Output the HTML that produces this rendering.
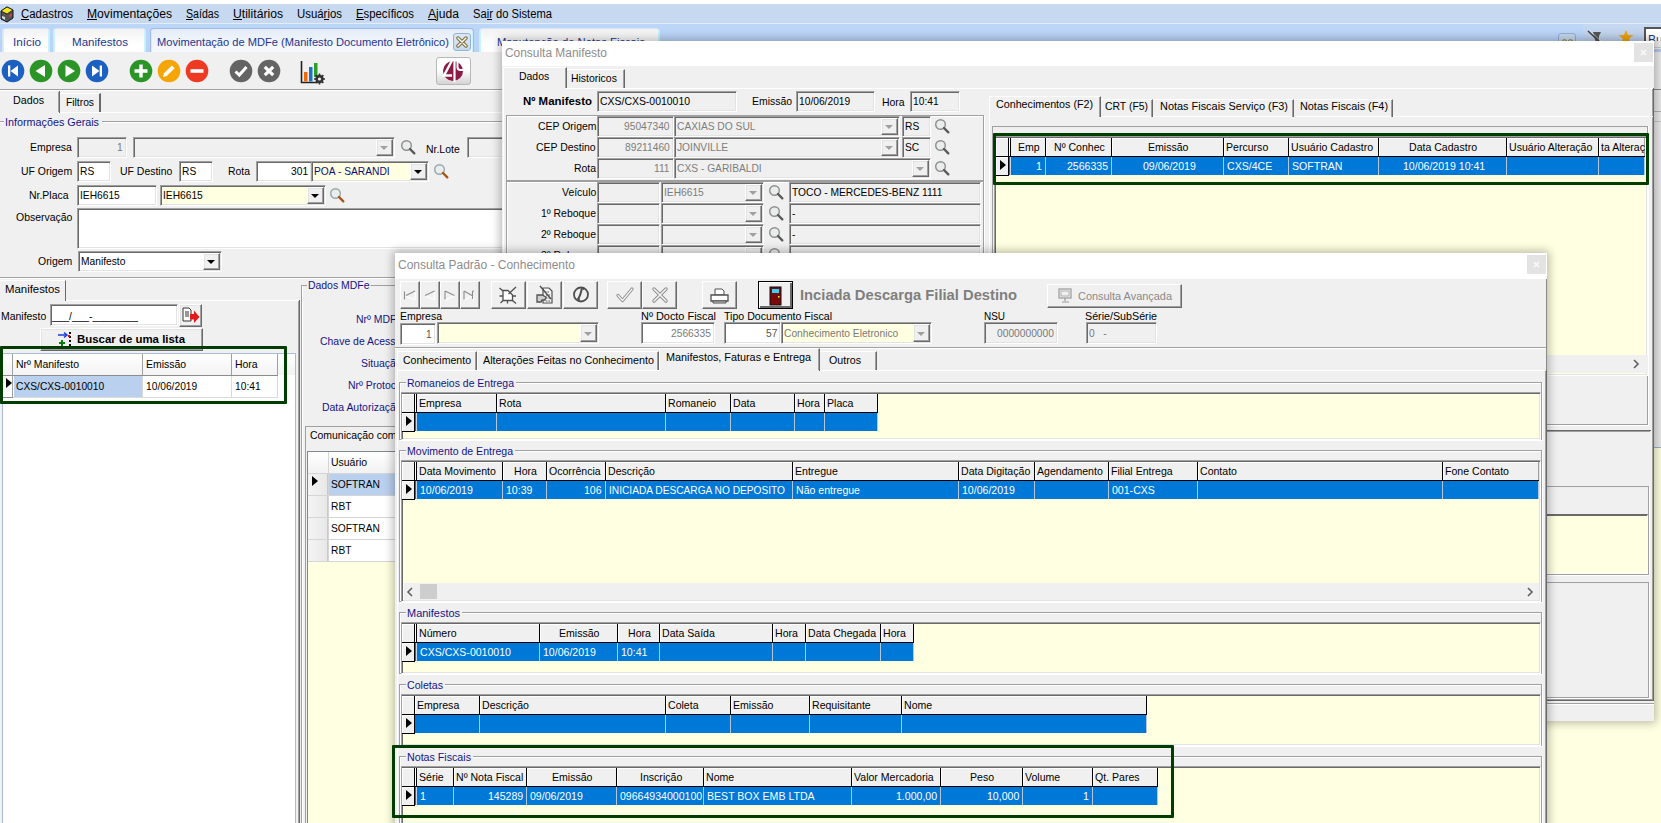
<!DOCTYPE html>
<html><head><meta charset="utf-8"><style>
html,body{margin:0;padding:0;width:1661px;height:823px;overflow:hidden;background:#f0f0f0;position:relative}
div{position:absolute;box-sizing:border-box}
.t{white-space:pre;line-height:1;font-family:"Liberation Sans", sans-serif}
svg{position:absolute}
</style></head><body>
<div style="left:0px;top:0px;width:1661px;height:4px;background:#ffffff"></div>
<div style="left:0px;top:4px;width:1661px;height:19px;background:#c6d9f0"></div>
<div style="left:0px;top:23px;width:1661px;height:1px;background:#e3ecf7"></div>
<div style="left:0px;top:24px;width:1661px;height:28px;background:linear-gradient(#bcd6f8,#b9d3f6)"></div>
<svg style="position:absolute;left:0;top:6px" width="14" height="17" viewBox="0 0 14 17"><path d="M1 5 L7 1 L13 4 L13 12 L7 16 L1 13 Z" fill="#555" stroke="#111" stroke-width="1"/><path d="M1 5 L7 1 L13 4 L7 8 Z" fill="#f4e81c" stroke="#111" stroke-width="0.8"/><path d="M2 10 L5 11 L5 14 L2 12Z" fill="#ddd"/><path d="M9 9 L12 8 L12 10 L9 11Z" fill="#e33"/></svg>
<div class="t" style="left:21.00px;top:8.34px;font-size:12px;color:#000;transform:scaleX(0.9508);transform-origin:0 0;">Cadastros</div>
<div style="left:21px;top:19px;width:8px;height:1px;background:#000"></div>
<div class="t" style="left:87.00px;top:8.34px;font-size:12px;color:#000;transform:scaleX(1.0115);transform-origin:0 0;">Movimentações</div>
<div style="left:87px;top:19px;width:10px;height:1px;background:#000"></div>
<div class="t" style="left:186.00px;top:8.34px;font-size:12px;color:#000;transform:scaleX(0.8834);transform-origin:0 0;">Saídas</div>
<div style="left:186px;top:19px;width:7px;height:1px;background:#000"></div>
<div class="t" style="left:233.00px;top:8.34px;font-size:12px;color:#000;transform:scaleX(1.0134);transform-origin:0 0;">Utilitários</div>
<div style="left:233px;top:19px;width:9px;height:1px;background:#000"></div>
<div class="t" style="left:297.00px;top:8.34px;font-size:12px;color:#000;transform:scaleX(0.9504);transform-origin:0 0;">Usuários</div>
<div style="left:324px;top:19px;width:5px;height:1px;background:#000"></div>
<div class="t" style="left:356.00px;top:8.34px;font-size:12px;color:#000;transform:scaleX(0.9453);transform-origin:0 0;">Específicos</div>
<div style="left:356px;top:19px;width:8px;height:1px;background:#000"></div>
<div class="t" style="left:428.00px;top:8.34px;font-size:12px;color:#000;transform:scaleX(1.0101);transform-origin:0 0;">Ajuda</div>
<div style="left:428px;top:19px;width:8px;height:1px;background:#000"></div>
<div class="t" style="left:473.00px;top:8.34px;font-size:12px;color:#000;transform:scaleX(0.9327);transform-origin:0 0;">Sair do Sistema</div>
<div style="left:487px;top:19px;width:5px;height:1px;background:#000"></div>
<div style="left:2px;top:28px;width:48px;height:24px;background:linear-gradient(#f2f2f2,#ffffff 70%);border:1px solid #d7e6f7;border-bottom:none;border-radius:4px 4px 0 0"></div>
<div style="left:3px;top:31px;width:1px;height:21px;background:#c9f3ff"></div>
<div style="left:48px;top:31px;width:1px;height:21px;background:#c9f3ff"></div>
<div class="t" style="left:13.00px;top:37.43px;font-size:11.3px;color:#1f3590;transform:scaleX(1.0368);transform-origin:0 0;">Início</div>
<div style="left:53px;top:28px;width:93px;height:24px;background:linear-gradient(#f2f2f2,#ffffff 70%);border:1px solid #d7e6f7;border-bottom:none;border-radius:4px 4px 0 0"></div>
<div style="left:54px;top:31px;width:1px;height:21px;background:#c9f3ff"></div>
<div style="left:144px;top:31px;width:1px;height:21px;background:#c9f3ff"></div>
<div class="t" style="left:71.50px;top:37.43px;font-size:11.3px;color:#1f3590;transform:scaleX(1.0249);transform-origin:0 0;">Manifestos</div>
<div style="left:150px;top:28px;width:324px;height:24px;background:linear-gradient(#e6edf8,#f4f7fc 80%);border:1px solid #9dbbe6;border-bottom:none;border-radius:4px 4px 0 0"></div>
<div style="left:151px;top:31px;width:1px;height:21px;background:#c9f3ff"></div>
<div style="left:472px;top:31px;width:1px;height:21px;background:#c9f3ff"></div>
<div class="t" style="left:156.50px;top:37.43px;font-size:11.3px;color:#1f3590;transform:scaleX(0.9830);transform-origin:0 0;">Movimentação de MDFe (Manifesto Documento Eletrônico)</div>
<div style="left:453px;top:33px;width:18px;height:18px;background:linear-gradient(#dbe6f4,#c9d9ee);border:1px solid #93b1d9;border-radius:3px"></div>
<svg style="position:absolute;left:456px;top:36px" width="12" height="12" viewBox="0 0 12 12"><path d="M2 2 L10 10 M10 2 L2 10" stroke="#7d6a2e" stroke-width="3.4" stroke-linecap="round"/><path d="M2 2 L10 10 M10 2 L2 10" stroke="#fff" stroke-width="1.4" stroke-linecap="round"/></svg>
<div style="left:479px;top:28px;width:181px;height:24px;background:linear-gradient(#f2f2f2,#ffffff 70%);border:1px solid #d7e6f7;border-bottom:none;border-radius:4px 4px 0 0"></div>
<div style="left:480px;top:31px;width:1px;height:21px;background:#c9f3ff"></div>
<div style="left:658px;top:31px;width:1px;height:21px;background:#c9f3ff"></div>
<div class="t" style="left:496.50px;top:37.43px;font-size:11.3px;color:#1f3590;transform:scaleX(0.9943);transform-origin:0 0;">Manutenção de Notas Fiscais</div>
<div style="left:1558px;top:33px;width:18px;height:12px;border:1px solid #8fb0d8;border-radius:3px;background:#c7d9ef"></div>
<div style="left:1583px;top:24px;width:78px;height:28px;background:linear-gradient(#c6d8f2,#b9cce8)"></div>
<svg style="position:absolute;left:1561px;top:38px" width="13" height="6" viewBox="0 0 13 6"><circle cx="3.5" cy="4" r="2.3" fill="none" stroke="#8a7a30" stroke-width="1"/><circle cx="9.5" cy="4" r="2.3" fill="none" stroke="#8a7a30" stroke-width="1"/></svg>
<svg style="position:absolute;left:1587px;top:30px" width="16" height="14" viewBox="0 0 16 14"><path d="M6 2 L14 2 L12 6 L12 13 L9 13 Z" fill="#555"/><path d="M1 1 L15 14" stroke="#444" stroke-width="1.6"/><path d="M2 0 L16 13" stroke="#eee" stroke-width="0.6"/></svg>
<svg style="position:absolute;left:1618px;top:29px" width="16" height="16" viewBox="0 0 16 16"><path d="M8 1 L10 6 L15.5 6.2 L11.2 9.5 L12.8 15 L8 11.8 L3.2 15 L4.8 9.5 L0.5 6.2 L6 6 Z" fill="#f0a30a"/></svg>
<div style="left:1644px;top:27px;width:17px;height:20px;background:#fff;border:1px solid #555;border-width:2px 0 0 2px"></div>
<div class="t" style="top:33.84px;font-size:12px;color:#2b3a8a;left:1648px;">Bu</div>
<div style="left:0px;top:52px;width:1661px;height:37px;background:#f0f0f0"></div>
<div style="left:0px;top:89px;width:1661px;height:1px;background:#a0a0a0"></div>
<div style="left:0px;top:90px;width:1661px;height:1px;background:#ffffff"></div>
<svg style="position:absolute;left:1px;top:59px" width="24" height="24" viewBox="0 0 24 24"><circle cx="12" cy="12" r="11.3" fill="#1c60c2"/><path d="M7 6.5 H9.3 V17.5 H7 Z" fill="#fff"/><path d="M9.5 12 L17 6.5 V17.5 Z" fill="#fff"/></svg>
<svg style="position:absolute;left:29px;top:59px" width="24" height="24" viewBox="0 0 24 24"><circle cx="12" cy="12" r="11.3" fill="#2b9426"/><path d="M6.5 12 L16 6 V18 Z" fill="#fff"/></svg>
<svg style="position:absolute;left:57px;top:59px" width="24" height="24" viewBox="0 0 24 24"><circle cx="12" cy="12" r="11.3" fill="#2b9426"/><path d="M8.5 6 L18 12 L8.5 18 Z" fill="#fff"/></svg>
<svg style="position:absolute;left:85px;top:59px" width="24" height="24" viewBox="0 0 24 24"><circle cx="12" cy="12" r="11.3" fill="#1c60c2"/><path d="M14.7 6.5 H17 V17.5 H14.7 Z" fill="#fff"/><path d="M14.5 12 L7 6.5 V17.5 Z" fill="#fff"/></svg>
<svg style="position:absolute;left:129px;top:59px" width="24" height="24" viewBox="0 0 24 24"><circle cx="12" cy="12" r="11.3" fill="#2b9426"/><path d="M10.3 5.5 H13.7 V10.3 H18.5 V13.7 H13.7 V18.5 H10.3 V13.7 H5.5 V10.3 H10.3 Z" fill="#fff"/></svg>
<svg style="position:absolute;left:157px;top:59px" width="24" height="24" viewBox="0 0 24 24"><circle cx="12" cy="12" r="11.3" fill="#f6a506"/><path d="M6 18 L7 14.2 L14.8 6.4 L17.6 9.2 L9.8 17 Z" fill="#fff"/></svg>
<svg style="position:absolute;left:185px;top:59px" width="24" height="24" viewBox="0 0 24 24"><circle cx="12" cy="12" r="11.3" fill="#ee3a22"/><rect x="5.5" y="10.2" width="13" height="3.6" fill="#fff"/></svg>
<svg style="position:absolute;left:229px;top:59px" width="24" height="24" viewBox="0 0 24 24"><circle cx="12" cy="12" r="11.3" fill="#646464"/><path d="M6.5 12.5 L10.3 16 L17.5 8" stroke="#fff" stroke-width="3" fill="none"/></svg>
<svg style="position:absolute;left:257px;top:59px" width="24" height="24" viewBox="0 0 24 24"><circle cx="12" cy="12" r="11.3" fill="#646464"/><path d="M7.8 7.8 L16.2 16.2 M16.2 7.8 L7.8 16.2" stroke="#fff" stroke-width="3.2"/></svg>
<svg style="position:absolute;left:300px;top:60px" width="26" height="25" viewBox="0 0 26 25"><path d="M1.5 1 V22.5 H18" stroke="#222" stroke-width="1.6" fill="none"/><rect x="4" y="12" width="3.5" height="9.5" fill="#f06a10"/><rect x="9" y="7" width="3.5" height="14.5" fill="#1c70c8"/><rect x="14" y="3" width="3.5" height="14" fill="#2aa02a"/><circle cx="19.5" cy="19" r="4.2" fill="#333"/><circle cx="19.5" cy="19" r="1.6" fill="#f0f0f0"/><path d="M19.5 13.5 V24.5 M14 19 H25 M15.6 15.1 L23.4 22.9 M23.4 15.1 L15.6 22.9" stroke="#333" stroke-width="1.6"/><circle cx="19.5" cy="19" r="1.6" fill="#f0f0f0"/></svg>
<div style="left:436px;top:57px;width:35px;height:28px;background:linear-gradient(#ffffff 45%,#d4d4d4);border:1px solid #b8b8b8;border-radius:3px"></div>
<svg style="position:absolute;left:442px;top:59px" width="24" height="24" viewBox="0 0 24 24"><circle cx="11" cy="12" r="10" fill="#8c1a42"/><path d="M10 1.5 L2 16.5 H10" stroke="#fff" stroke-width="2.4" fill="none"/><path d="M12.5 1.5 V23" stroke="#fff" stroke-width="2.2"/><path d="M15.5 2.5 V8 Q15.5 11 18.5 11 H21" stroke="#fff" stroke-width="2" fill="none"/></svg>
<div style="left:0px;top:91px;width:1661px;height:732px;background:#f0f0f0"></div>
<div style="left:0px;top:112px;width:1661px;height:1px;background:#ffffff"></div>
<div style="left:0px;top:91px;width:60px;height:22px;background:#f0f0f0;border-right:1px solid #696969"></div>
<div style="left:58px;top:92px;width:1px;height:20px;background:#a0a0a0"></div>
<div class="t" style="left:13.00px;top:94.69px;font-size:11px;color:#000;transform:scaleX(0.9750);transform-origin:0 0;">Dados</div>
<div style="left:60px;top:93px;width:41px;height:19px;border-top:1px solid #fff;border-right:2px solid #696969"></div>
<div class="t" style="left:66.00px;top:96.69px;font-size:11px;color:#000;transform:scaleX(0.9351);transform-origin:0 0;">Filtros</div>
<div style="left:0px;top:121px;width:1661px;height:1px;background:#a0a0a0"></div>
<div style="left:0px;top:122px;width:1661px;height:1px;background:#ffffff"></div>
<div style="left:4px;top:116px;width:98px;height:12px;background:#f0f0f0"></div>
<div class="t" style="left:5.00px;top:116.69px;font-size:11px;color:#14148a;transform:scaleX(0.9794);transform-origin:0 0;">Informações Gerais</div>
<div class="t" style="left:30.19px;top:141.69px;font-size:11px;color:#000;transform:scaleX(0.9500);transform-origin:0 0;">Empresa</div>
<div style="left:77px;top:137px;width:50px;height:21px;border:1px solid;border-color:#a0a0a0 #fff #fff #a0a0a0;box-shadow:inset 1px 1px #696969, inset -1px -1px #e3e3e3;background:#f0f0f0;"></div>
<div class="t" style="left:117.31px;top:142.19px;font-size:11px;color:#7a7a7a;transform:scaleX(0.9300);transform-origin:0 0;">1</div>
<div style="left:133px;top:137px;width:262px;height:21px;border:1px solid;border-color:#a0a0a0 #fff #fff #a0a0a0;box-shadow:inset 1px 1px #696969, inset -1px -1px #e3e3e3;background:#f0f0f0;"></div>
<div style="left:376px;top:139px;width:17px;height:17px;border:1px solid;border-color:#fff #696969 #696969 #fff;box-shadow:inset -1px -1px #a0a0a0, inset 1px 1px #e3e3e3;background:#f0f0f0;"></div>
<div style="left:380px;top:146px;width:0;height:0;border-left:4px solid transparent;border-right:4px solid transparent;border-top:4px solid #a0a0a0"></div>
<svg style="position:absolute;left:399px;top:139px" width="18" height="18" viewBox="0 0 18 18"><circle cx="7.5" cy="6.5" r="4.8" fill="#e9eded" stroke="#8e8e8e" stroke-width="1.4"/><path d="M11 10 L15.3 14.3" stroke="#5a5a5a" stroke-width="2.4" stroke-linecap="round"/></svg>
<div class="t" style="left:426.00px;top:143.69px;font-size:11px;color:#000;transform:scaleX(0.9500);transform-origin:0 0;">Nr.Lote</div>
<div style="left:467px;top:137px;width:60px;height:21px;border:1px solid;border-color:#a0a0a0 #fff #fff #a0a0a0;box-shadow:inset 1px 1px #696969, inset -1px -1px #e3e3e3;background:#f0f0f0;"></div>
<div class="t" style="left:20.91px;top:165.69px;font-size:11px;color:#000;transform:scaleX(0.9500);transform-origin:0 0;">UF Origem</div>
<div style="left:77px;top:161px;width:34px;height:21px;border:1px solid;border-color:#a0a0a0 #fff #fff #a0a0a0;box-shadow:inset 1px 1px #696969, inset -1px -1px #e3e3e3;background:#fff;"></div>
<div class="t" style="left:80.00px;top:166.19px;font-size:11px;color:#000;transform:scaleX(0.9300);transform-origin:0 0;">RS</div>
<div class="t" style="left:120.00px;top:165.69px;font-size:11px;color:#000;transform:scaleX(0.9500);transform-origin:0 0;">UF Destino</div>
<div style="left:179px;top:161px;width:34px;height:21px;border:1px solid;border-color:#a0a0a0 #fff #fff #a0a0a0;box-shadow:inset 1px 1px #696969, inset -1px -1px #e3e3e3;background:#fff;"></div>
<div class="t" style="left:182.00px;top:166.19px;font-size:11px;color:#000;transform:scaleX(0.9300);transform-origin:0 0;">RS</div>
<div class="t" style="left:228.00px;top:165.69px;font-size:11px;color:#000;transform:scaleX(0.9500);transform-origin:0 0;">Rota</div>
<div style="left:256px;top:161px;width:56px;height:21px;border:1px solid;border-color:#a0a0a0 #fff #fff #a0a0a0;box-shadow:inset 1px 1px #696969, inset -1px -1px #e3e3e3;background:#fff;"></div>
<div class="t" style="left:290.93px;top:166.19px;font-size:11px;color:#000;transform:scaleX(0.9300);transform-origin:0 0;">301</div>
<div style="left:311px;top:161px;width:118px;height:21px;border:1px solid;border-color:#a0a0a0 #fff #fff #a0a0a0;box-shadow:inset 1px 1px #696969, inset -1px -1px #e3e3e3;background:#ffffe1;"></div>
<div style="left:410px;top:163px;width:17px;height:17px;border:1px solid;border-color:#fff #696969 #696969 #fff;box-shadow:inset -1px -1px #a0a0a0, inset 1px 1px #e3e3e3;background:#f0f0f0;"></div>
<div style="left:414px;top:170px;width:0;height:0;border-left:4px solid transparent;border-right:4px solid transparent;border-top:4px solid #000"></div>
<div class="t" style="left:314.00px;top:166.19px;font-size:11px;color:#0c0c82;transform:scaleX(0.9300);transform-origin:0 0;">POA - SARANDI</div>
<svg style="position:absolute;left:432px;top:163px" width="18" height="18" viewBox="0 0 18 18"><circle cx="7.5" cy="6.5" r="4.8" fill="#e9eded" stroke="#98a6a8" stroke-width="1.4"/><path d="M11 10 L15.3 14.3" stroke="#a4541c" stroke-width="2.4" stroke-linecap="round"/></svg>
<div class="t" style="left:28.51px;top:189.69px;font-size:11px;color:#000;transform:scaleX(0.9500);transform-origin:0 0;">Nr.Placa</div>
<div style="left:77px;top:185px;width:80px;height:21px;border:1px solid;border-color:#a0a0a0 #fff #fff #a0a0a0;box-shadow:inset 1px 1px #696969, inset -1px -1px #e3e3e3;background:#fff;"></div>
<div class="t" style="left:80.00px;top:190.19px;font-size:11px;color:#000;transform:scaleX(0.9300);transform-origin:0 0;">IEH6615</div>
<div style="left:160px;top:185px;width:166px;height:21px;border:1px solid;border-color:#a0a0a0 #fff #fff #a0a0a0;box-shadow:inset 1px 1px #696969, inset -1px -1px #e3e3e3;background:#ffffe1;"></div>
<div style="left:307px;top:187px;width:17px;height:17px;border:1px solid;border-color:#fff #696969 #696969 #fff;box-shadow:inset -1px -1px #a0a0a0, inset 1px 1px #e3e3e3;background:#f0f0f0;"></div>
<div style="left:311px;top:194px;width:0;height:0;border-left:4px solid transparent;border-right:4px solid transparent;border-top:4px solid #000"></div>
<div class="t" style="left:163.00px;top:190.19px;font-size:11px;color:#000;transform:scaleX(0.9300);transform-origin:0 0;">IEH6615</div>
<svg style="position:absolute;left:328px;top:187px" width="18" height="18" viewBox="0 0 18 18"><circle cx="7.5" cy="6.5" r="4.8" fill="#e9eded" stroke="#98a6a8" stroke-width="1.4"/><path d="M11 10 L15.3 14.3" stroke="#a4541c" stroke-width="2.4" stroke-linecap="round"/></svg>
<div class="t" style="left:15.66px;top:211.69px;font-size:11px;color:#000;transform:scaleX(0.9500);transform-origin:0 0;">Observação</div>
<div style="left:77px;top:208px;width:500px;height:41px;border:1px solid;border-color:#a0a0a0 #fff #fff #a0a0a0;box-shadow:inset 1px 1px #696969, inset -1px -1px #e3e3e3;background:#fff;"></div>
<div class="t" style="left:37.74px;top:255.69px;font-size:11px;color:#000;transform:scaleX(0.9500);transform-origin:0 0;">Origem</div>
<div style="left:78px;top:251px;width:144px;height:21px;border:1px solid;border-color:#a0a0a0 #fff #fff #a0a0a0;box-shadow:inset 1px 1px #696969, inset -1px -1px #e3e3e3;background:#fff;"></div>
<div style="left:203px;top:253px;width:17px;height:17px;border:1px solid;border-color:#fff #696969 #696969 #fff;box-shadow:inset -1px -1px #a0a0a0, inset 1px 1px #e3e3e3;background:#f0f0f0;"></div>
<div style="left:207px;top:260px;width:0;height:0;border-left:4px solid transparent;border-right:4px solid transparent;border-top:4px solid #000"></div>
<div class="t" style="left:81.00px;top:256.19px;font-size:11px;color:#000;transform:scaleX(0.9300);transform-origin:0 0;">Manifesto</div>
<div style="left:0px;top:277px;width:1661px;height:1px;background:#a0a0a0"></div>
<div style="left:0px;top:278px;width:1661px;height:1px;background:#ffffff"></div>
<div style="left:0px;top:280px;width:66px;height:21px;border-right:1px solid #696969;border-top:1px solid #fff"></div>
<div class="t" style="left:5.00px;top:283.69px;font-size:11px;color:#000;transform:scaleX(1.0341);transform-origin:0 0;">Manifestos</div>
<div style="left:66px;top:300px;width:233px;height:1px;background:#ffffff"></div>
<div style="left:299px;top:300px;width:1px;height:523px;background:#696969"></div>
<div style="left:298px;top:301px;width:1px;height:522px;background:#a0a0a0"></div>
<div class="t" style="left:1.00px;top:310.69px;font-size:11px;color:#000;transform:scaleX(0.9500);transform-origin:0 0;">Manifesto</div>
<div style="left:50px;top:304px;width:128px;height:22px;border:1px solid;border-color:#a0a0a0 #fff #fff #a0a0a0;box-shadow:inset 1px 1px #696969, inset -1px -1px #e3e3e3;background:#fff;"></div>
<div class="t" style="left:52.00px;top:310.69px;font-size:11px;color:#000;transform:scaleX(0.9312);transform-origin:0 0;">___/___-________</div>
<div style="left:179px;top:304px;width:23px;height:23px;border:1px solid;border-color:#fff #696969 #696969 #fff;box-shadow:inset -1px -1px #a0a0a0, inset 1px 1px #e3e3e3;background:#f0f0f0;"></div>
<svg style="position:absolute;left:182px;top:307px" width="18" height="17" viewBox="0 0 18 17"><path d="M1 1 H7 L9 3 V14 H1 Z" fill="#fff" stroke="#333"/><path d="M3 5 H7 M3 7 H7 M3 9 H7" stroke="#333"/><path d="M8 7 H12 V3.5 L17.5 10 L12 16 V12.5 H8 Z" fill="#e21a1a"/></svg>
<div style="left:40px;top:328px;width:163px;height:23px;border:1px solid;border-color:#fff #696969 #696969 #fff;box-shadow:inset -1px -1px #a0a0a0, inset 1px 1px #e3e3e3;background:#f0f0f0;"></div>
<svg style="position:absolute;left:57px;top:331px" width="16" height="17" viewBox="0 0 16 17"><path d="M1 4 H9" stroke="#1a3ae0" stroke-width="1.5"/><path d="M7 1.5 L10 4 L7 6.5" fill="none" stroke="#1a3ae0" stroke-width="1.5"/><path d="M13 1 V16" stroke="#111" stroke-width="2" stroke-dasharray="2 2"/><path d="M2 12 H8 M5 9 V15" stroke="#0a7a0a" stroke-width="2"/><rect x="11" y="4" width="2" height="2" fill="#e00"/></svg>
<div class="t" style="left:77.00px;top:333.69px;font-size:11px;color:#000;transform:scaleX(1.0392);transform-origin:0 0;font-weight:bold;">Buscar de uma lista</div>
<div style="left:2px;top:353px;width:294px;height:470px;background:#fff;border:1px solid #a9bcd6;border-bottom:none"></div>
<div style="left:3px;top:354px;width:292px;height:21px;background:linear-gradient(#ffffff,#f3f3f3)"></div>
<div style="left:3px;top:375px;width:275px;height:1px;background:#8c8c8c"></div>
<div style="left:142px;top:354px;width:1px;height:21px;background:#a0a0a0"></div>
<div style="left:142px;top:376px;width:1px;height:21px;background:#dadada"></div>
<div style="left:231px;top:354px;width:1px;height:21px;background:#a0a0a0"></div>
<div style="left:231px;top:376px;width:1px;height:21px;background:#dadada"></div>
<div style="left:277px;top:354px;width:1px;height:21px;background:#a0a0a0"></div>
<div style="left:277px;top:376px;width:1px;height:21px;background:#dadada"></div>
<div style="left:12px;top:354px;width:1px;height:43px;background:#a0a0a0"></div>
<div style="left:3px;top:397px;width:275px;height:1px;background:#dadada"></div>
<div style="left:3px;top:397px;width:10px;height:1px;background:#8c8c8c"></div>
<div style="left:14px;top:376px;width:128px;height:21px;background:#b9d0ee"></div>
<div class="t" style="left:16.00px;top:358.69px;font-size:11px;color:#000;transform:scaleX(0.9500);transform-origin:0 0;">Nrº Manifesto</div>
<div class="t" style="left:146.00px;top:358.69px;font-size:11px;color:#000;transform:scaleX(0.9500);transform-origin:0 0;">Emissão</div>
<div class="t" style="left:235.00px;top:358.69px;font-size:11px;color:#000;transform:scaleX(0.9500);transform-origin:0 0;">Hora</div>
<div style="left:6px;top:378px;width:0;height:0;border-top:5px solid transparent;border-bottom:5px solid transparent;border-left:6px solid #000"></div>
<div class="t" style="left:16.00px;top:380.69px;font-size:11px;color:#000;transform:scaleX(0.9300);transform-origin:0 0;">CXS/CXS-0010010</div>
<div class="t" style="left:146.00px;top:380.69px;font-size:11px;color:#000;transform:scaleX(0.9300);transform-origin:0 0;">10/06/2019</div>
<div class="t" style="left:235.00px;top:380.69px;font-size:11px;color:#000;transform:scaleX(0.9300);transform-origin:0 0;">10:41</div>
<div style="left:0px;top:346px;width:287px;height:58px;border:3px solid #003d00;border-radius:1px"></div>
<div style="left:301px;top:285px;width:1400px;height:600px;border:1px solid #a0a0a0;border-right:none;border-bottom:none"></div>
<div style="left:302px;top:286px;width:1px;height:540px;background:#ffffff"></div>
<div class="t" style="left:307px;top:279px;font-size:11px;line-height:13px;color:#14148a;background:#f0f0f0;padding:0 1px;transform:scaleX(0.95);transform-origin:0 0">Dados MDFe</div>
<div class="t" style="left:355.62px;top:313.69px;font-size:11px;color:#14148a;transform:scaleX(0.9500);transform-origin:0 0;">Nrº MDF</div>
<div class="t" style="left:320.49px;top:335.69px;font-size:11px;color:#14148a;transform:scaleX(0.9500);transform-origin:0 0;">Chave de Acess</div>
<div class="t" style="left:361.15px;top:357.69px;font-size:11px;color:#14148a;transform:scaleX(0.9500);transform-origin:0 0;">Situaçã</div>
<div class="t" style="left:348.05px;top:379.69px;font-size:11px;color:#14148a;transform:scaleX(0.9500);transform-origin:0 0;">Nrº Protoc</div>
<div class="t" style="left:322.23px;top:401.69px;font-size:11px;color:#14148a;transform:scaleX(0.9500);transform-origin:0 0;">Data Autorizaçã</div>
<div style="left:305px;top:426px;width:1400px;height:600px;border:1px solid #a0a0a0;border-right:none;border-bottom:none"></div>
<div class="t" style="left:309px;top:429px;font-size:11px;line-height:13px;color:#000;background:#f0f0f0;padding:0 1px;transform:scaleX(0.95);transform-origin:0 0">Comunicação com</div>
<div style="left:307px;top:451px;width:1360px;height:380px;background:#ffffe1;border:1px solid #828790"></div>
<div style="left:308px;top:452px;width:1360px;height:21px;background:linear-gradient(#fff,#f2f2f2)"></div>
<div style="left:328px;top:452px;width:1px;height:109px;background:#d5d5d5"></div>
<div style="left:308px;top:473px;width:1360px;height:1px;background:#d5d5d5"></div>
<div style="left:308px;top:495px;width:1360px;height:1px;background:#d5d5d5"></div>
<div style="left:308px;top:517px;width:1360px;height:1px;background:#d5d5d5"></div>
<div style="left:308px;top:539px;width:1360px;height:1px;background:#d5d5d5"></div>
<div style="left:308px;top:561px;width:1360px;height:1px;background:#d5d5d5"></div>
<div style="left:308px;top:474px;width:20px;height:21px;background:linear-gradient(90deg,#f4f4f4,#e8e8e8);border-right:1px solid #c8c8c8"></div>
<div style="left:329px;top:474px;width:1340px;height:21px;background:#b9d0ee"></div>
<div class="t" style="left:331.00px;top:478.69px;font-size:11px;color:#000;transform:scaleX(0.9300);transform-origin:0 0;">SOFTRAN</div>
<div style="left:308px;top:496px;width:20px;height:21px;background:linear-gradient(90deg,#f4f4f4,#e8e8e8);border-right:1px solid #c8c8c8"></div>
<div style="left:329px;top:496px;width:1340px;height:21px;background:#fff"></div>
<div class="t" style="left:331.00px;top:500.69px;font-size:11px;color:#000;transform:scaleX(0.9300);transform-origin:0 0;">RBT</div>
<div style="left:308px;top:518px;width:20px;height:21px;background:linear-gradient(90deg,#f4f4f4,#e8e8e8);border-right:1px solid #c8c8c8"></div>
<div style="left:329px;top:518px;width:1340px;height:21px;background:#fff"></div>
<div class="t" style="left:331.00px;top:522.69px;font-size:11px;color:#000;transform:scaleX(0.9300);transform-origin:0 0;">SOFTRAN</div>
<div style="left:308px;top:540px;width:20px;height:21px;background:linear-gradient(90deg,#f4f4f4,#e8e8e8);border-right:1px solid #c8c8c8"></div>
<div style="left:329px;top:540px;width:1340px;height:21px;background:#fff"></div>
<div class="t" style="left:331.00px;top:544.69px;font-size:11px;color:#000;transform:scaleX(0.9300);transform-origin:0 0;">RBT</div>
<div class="t" style="left:331.00px;top:456.69px;font-size:11px;color:#000;transform:scaleX(0.9500);transform-origin:0 0;">Usuário</div>
<div style="left:312px;top:476px;width:0;height:0;border-top:5px solid transparent;border-bottom:5px solid transparent;border-left:6px solid #000"></div>
<div style="left:1654px;top:41px;width:7px;height:407px;background:#e9e9e9"></div>
<div style="left:1654px;top:47px;width:7px;height:1px;background:#c8c8c8"></div>
<div style="left:1654px;top:49px;width:7px;height:3px;background:#b4c8ea"></div>
<div style="left:1654px;top:89px;width:7px;height:1px;background:#8a8a8a"></div>
<div style="left:1654px;top:111px;width:7px;height:1px;background:#b0b0b0"></div>
<div style="left:1654px;top:121px;width:7px;height:1px;background:#c8c8c8"></div>
<div style="left:1654px;top:447px;width:7px;height:1px;background:#9fb2c8"></div>
<div style="left:1654px;top:448px;width:7px;height:375px;background:#ffffe1"></div>
<div style="left:502px;top:41px;width:1152px;height:680px;background:#f0f0f0;box-shadow:0 0 9px 2px rgba(0,0,0,0.28)"></div>
<div style="left:502px;top:41px;width:1152px;height:25px;background:#fff"></div>
<div class="t" style="left:505.00px;top:46.54px;font-size:12px;color:#8d8d8d;transform:scaleX(0.9930);transform-origin:0 0;">Consulta Manifesto</div>
<div style="left:1634px;top:43px;width:19px;height:19px;background:#e3e3e3"></div>
<svg style="position:absolute;left:1640px;top:49px" width="7" height="7" viewBox="0 0 7 7"><path d="M1 1 L6 6 M6 1 L1 6" stroke="#fbfbfb" stroke-width="1.3"/></svg>
<div style="left:566px;top:88px;width:1087px;height:1px;background:#ffffff"></div>
<div style="left:503px;top:67px;width:1px;height:633px;background:#ffffff"></div>
<div style="left:1653px;top:88px;width:1px;height:612px;background:#696969"></div>
<div style="left:1652px;top:89px;width:1px;height:611px;background:#a0a0a0"></div>
<div style="left:503px;top:700px;width:1151px;height:1px;background:#696969"></div>
<div style="left:503px;top:699px;width:1150px;height:1px;background:#a0a0a0"></div>
<div style="left:503px;top:67px;width:64px;height:21px;border-top:1px solid #fff;border-right:1px solid #696969"></div>
<div style="left:565px;top:68px;width:1px;height:20px;background:#a0a0a0"></div>
<div class="t" style="left:519.00px;top:70.69px;font-size:11px;color:#000;transform:scaleX(0.9500);transform-origin:0 0;">Dados</div>
<div style="left:567px;top:69px;width:58px;height:19px;border-top:1px solid #fff;border-right:1px solid #696969"></div>
<div style="left:623px;top:70px;width:1px;height:18px;background:#a0a0a0"></div>
<div class="t" style="left:571.00px;top:72.69px;font-size:11px;color:#000;transform:scaleX(0.9500);transform-origin:0 0;">Historicos</div>
<div style="left:502px;top:703px;width:1152px;height:1px;background:#a0a0a0"></div>
<div style="left:502px;top:704px;width:1152px;height:1px;background:#ffffff"></div>
<div class="t" style="left:523.00px;top:95.69px;font-size:11px;color:#000;transform:scaleX(1.0399);transform-origin:0 0;font-weight:bold;">Nº Manifesto</div>
<div style="left:597px;top:91px;width:140px;height:21px;border:1px solid;border-color:#a0a0a0 #fff #fff #a0a0a0;box-shadow:inset 1px 1px #696969, inset -1px -1px #e3e3e3;background:#f0f0f0;"></div>
<div class="t" style="left:600.00px;top:96.19px;font-size:11px;color:#000;transform:scaleX(0.9496);transform-origin:0 0;">CXS/CXS-0010010</div>
<div class="t" style="left:751.93px;top:95.69px;font-size:11px;color:#000;transform:scaleX(0.9500);transform-origin:0 0;">Emissão</div>
<div style="left:796px;top:91px;width:79px;height:21px;border:1px solid;border-color:#a0a0a0 #fff #fff #a0a0a0;box-shadow:inset 1px 1px #696969, inset -1px -1px #e3e3e3;background:#f0f0f0;"></div>
<div class="t" style="left:799.00px;top:96.19px;font-size:11px;color:#000;transform:scaleX(0.9300);transform-origin:0 0;">10/06/2019</div>
<div class="t" style="left:882.00px;top:96.69px;font-size:11px;color:#000;transform:scaleX(0.9500);transform-origin:0 0;">Hora</div>
<div style="left:910px;top:91px;width:50px;height:21px;border:1px solid;border-color:#a0a0a0 #fff #fff #a0a0a0;box-shadow:inset 1px 1px #696969, inset -1px -1px #e3e3e3;background:#f0f0f0;"></div>
<div class="t" style="left:913.00px;top:96.19px;font-size:11px;color:#000;transform:scaleX(0.9300);transform-origin:0 0;">10:41</div>
<div style="left:507px;top:116px;width:478px;height:66px;border:1px solid #fff"></div>
<div style="left:506px;top:115px;width:478px;height:66px;border:1px solid #a0a0a0"></div>
<div class="t" style="left:537.54px;top:120.69px;font-size:11px;color:#000;transform:scaleX(0.9500);transform-origin:0 0;">CEP Origem</div>
<div style="left:597px;top:116px;width:77px;height:21px;border:1px solid;border-color:#a0a0a0 #fff #fff #a0a0a0;box-shadow:inset 1px 1px #696969, inset -1px -1px #e3e3e3;background:#f0f0f0;"></div>
<div class="t" style="left:624.49px;top:121.19px;font-size:11px;color:#7d7d7d;transform:scaleX(0.9300);transform-origin:0 0;">95047340</div>
<div style="left:674px;top:116px;width:226px;height:21px;border:1px solid;border-color:#a0a0a0 #fff #fff #a0a0a0;box-shadow:inset 1px 1px #696969, inset -1px -1px #e3e3e3;background:#f0f0f0;"></div>
<div style="left:881px;top:118px;width:17px;height:17px;border:1px solid;border-color:#fff #696969 #696969 #fff;box-shadow:inset -1px -1px #a0a0a0, inset 1px 1px #e3e3e3;background:#f0f0f0;"></div>
<div style="left:885px;top:125px;width:0;height:0;border-left:4px solid transparent;border-right:4px solid transparent;border-top:4px solid #a0a0a0"></div>
<div class="t" style="left:677.00px;top:121.19px;font-size:11px;color:#7d7d7d;transform:scaleX(0.9300);transform-origin:0 0;">CAXIAS DO SUL</div>
<div style="left:902px;top:116px;width:29px;height:21px;border:1px solid;border-color:#a0a0a0 #fff #fff #a0a0a0;box-shadow:inset 1px 1px #696969, inset -1px -1px #e3e3e3;background:#f0f0f0;"></div>
<div class="t" style="left:905.00px;top:121.19px;font-size:11px;color:#000;transform:scaleX(0.9300);transform-origin:0 0;">RS</div>
<svg style="position:absolute;left:933px;top:118px" width="18" height="18" viewBox="0 0 18 18"><circle cx="7.5" cy="6.5" r="4.8" fill="#e9eded" stroke="#8e8e8e" stroke-width="1.4"/><path d="M11 10 L15.3 14.3" stroke="#5a5a5a" stroke-width="2.4" stroke-linecap="round"/></svg>
<div class="t" style="left:536.37px;top:141.69px;font-size:11px;color:#000;transform:scaleX(0.9500);transform-origin:0 0;">CEP Destino</div>
<div style="left:597px;top:137px;width:77px;height:21px;border:1px solid;border-color:#a0a0a0 #fff #fff #a0a0a0;box-shadow:inset 1px 1px #696969, inset -1px -1px #e3e3e3;background:#f0f0f0;"></div>
<div class="t" style="left:625.25px;top:142.19px;font-size:11px;color:#7d7d7d;transform:scaleX(0.9300);transform-origin:0 0;">89211460</div>
<div style="left:674px;top:137px;width:226px;height:21px;border:1px solid;border-color:#a0a0a0 #fff #fff #a0a0a0;box-shadow:inset 1px 1px #696969, inset -1px -1px #e3e3e3;background:#f0f0f0;"></div>
<div style="left:881px;top:139px;width:17px;height:17px;border:1px solid;border-color:#fff #696969 #696969 #fff;box-shadow:inset -1px -1px #a0a0a0, inset 1px 1px #e3e3e3;background:#f0f0f0;"></div>
<div style="left:885px;top:146px;width:0;height:0;border-left:4px solid transparent;border-right:4px solid transparent;border-top:4px solid #a0a0a0"></div>
<div class="t" style="left:677.00px;top:142.19px;font-size:11px;color:#7d7d7d;transform:scaleX(0.9300);transform-origin:0 0;">JOINVILLE</div>
<div style="left:902px;top:137px;width:29px;height:21px;border:1px solid;border-color:#a0a0a0 #fff #fff #a0a0a0;box-shadow:inset 1px 1px #696969, inset -1px -1px #e3e3e3;background:#f0f0f0;"></div>
<div class="t" style="left:905.00px;top:142.19px;font-size:11px;color:#000;transform:scaleX(0.9300);transform-origin:0 0;">SC</div>
<svg style="position:absolute;left:933px;top:139px" width="18" height="18" viewBox="0 0 18 18"><circle cx="7.5" cy="6.5" r="4.8" fill="#e9eded" stroke="#8e8e8e" stroke-width="1.4"/><path d="M11 10 L15.3 14.3" stroke="#5a5a5a" stroke-width="2.4" stroke-linecap="round"/></svg>
<div class="t" style="left:573.93px;top:162.69px;font-size:11px;color:#000;transform:scaleX(0.9500);transform-origin:0 0;">Rota</div>
<div style="left:597px;top:158px;width:77px;height:21px;border:1px solid;border-color:#a0a0a0 #fff #fff #a0a0a0;box-shadow:inset 1px 1px #696969, inset -1px -1px #e3e3e3;background:#f0f0f0;"></div>
<div class="t" style="left:654.45px;top:163.19px;font-size:11px;color:#7d7d7d;transform:scaleX(0.9300);transform-origin:0 0;">111</div>
<div style="left:674px;top:158px;width:257px;height:21px;border:1px solid;border-color:#a0a0a0 #fff #fff #a0a0a0;box-shadow:inset 1px 1px #696969, inset -1px -1px #e3e3e3;background:#f0f0f0;"></div>
<div style="left:912px;top:160px;width:17px;height:17px;border:1px solid;border-color:#fff #696969 #696969 #fff;box-shadow:inset -1px -1px #a0a0a0, inset 1px 1px #e3e3e3;background:#f0f0f0;"></div>
<div style="left:916px;top:167px;width:0;height:0;border-left:4px solid transparent;border-right:4px solid transparent;border-top:4px solid #a0a0a0"></div>
<div class="t" style="left:677.00px;top:163.19px;font-size:11px;color:#7d7d7d;transform:scaleX(0.9300);transform-origin:0 0;">CXS - GARIBALDI</div>
<svg style="position:absolute;left:933px;top:160px" width="18" height="18" viewBox="0 0 18 18"><circle cx="7.5" cy="6.5" r="4.8" fill="#e9eded" stroke="#8e8e8e" stroke-width="1.4"/><path d="M11 10 L15.3 14.3" stroke="#5a5a5a" stroke-width="2.4" stroke-linecap="round"/></svg>
<div style="left:507px;top:182px;width:478px;height:99px;border:1px solid #fff"></div>
<div style="left:506px;top:181px;width:478px;height:99px;border:1px solid #a0a0a0"></div>
<div class="t" style="left:561.72px;top:186.69px;font-size:11px;color:#000;transform:scaleX(0.9500);transform-origin:0 0;">Veículo</div>
<div style="left:597px;top:182px;width:63px;height:21px;border:1px solid;border-color:#a0a0a0 #fff #fff #a0a0a0;box-shadow:inset 1px 1px #696969, inset -1px -1px #e3e3e3;background:#f0f0f0;"></div>
<div style="left:661px;top:182px;width:103px;height:21px;border:1px solid;border-color:#a0a0a0 #fff #fff #a0a0a0;box-shadow:inset 1px 1px #696969, inset -1px -1px #e3e3e3;background:#f0f0f0;"></div>
<div style="left:745px;top:184px;width:17px;height:17px;border:1px solid;border-color:#fff #696969 #696969 #fff;box-shadow:inset -1px -1px #a0a0a0, inset 1px 1px #e3e3e3;background:#f0f0f0;"></div>
<div style="left:749px;top:191px;width:0;height:0;border-left:4px solid transparent;border-right:4px solid transparent;border-top:4px solid #a0a0a0"></div>
<div class="t" style="left:664.00px;top:187.19px;font-size:11px;color:#7d7d7d;transform:scaleX(0.9300);transform-origin:0 0;">IEH6615</div>
<svg style="position:absolute;left:767px;top:184px" width="18" height="18" viewBox="0 0 18 18"><circle cx="7.5" cy="6.5" r="4.8" fill="#e9eded" stroke="#8e8e8e" stroke-width="1.4"/><path d="M11 10 L15.3 14.3" stroke="#5a5a5a" stroke-width="2.4" stroke-linecap="round"/></svg>
<div style="left:789px;top:182px;width:192px;height:21px;border:1px solid;border-color:#a0a0a0 #fff #fff #a0a0a0;box-shadow:inset 1px 1px #696969, inset -1px -1px #e3e3e3;background:#f0f0f0;"></div>
<div class="t" style="left:792.00px;top:187.19px;font-size:11px;color:#000;transform:scaleX(0.9300);transform-origin:0 0;">TOCO - MERCEDES-BENZ 1111</div>
<div class="t" style="left:541.05px;top:207.69px;font-size:11px;color:#000;transform:scaleX(0.9500);transform-origin:0 0;">1º Reboque</div>
<div style="left:597px;top:203px;width:63px;height:21px;border:1px solid;border-color:#a0a0a0 #fff #fff #a0a0a0;box-shadow:inset 1px 1px #696969, inset -1px -1px #e3e3e3;background:#f0f0f0;"></div>
<div style="left:661px;top:203px;width:103px;height:21px;border:1px solid;border-color:#a0a0a0 #fff #fff #a0a0a0;box-shadow:inset 1px 1px #696969, inset -1px -1px #e3e3e3;background:#f0f0f0;"></div>
<div style="left:745px;top:205px;width:17px;height:17px;border:1px solid;border-color:#fff #696969 #696969 #fff;box-shadow:inset -1px -1px #a0a0a0, inset 1px 1px #e3e3e3;background:#f0f0f0;"></div>
<div style="left:749px;top:212px;width:0;height:0;border-left:4px solid transparent;border-right:4px solid transparent;border-top:4px solid #a0a0a0"></div>
<svg style="position:absolute;left:767px;top:205px" width="18" height="18" viewBox="0 0 18 18"><circle cx="7.5" cy="6.5" r="4.8" fill="#e9eded" stroke="#8e8e8e" stroke-width="1.4"/><path d="M11 10 L15.3 14.3" stroke="#5a5a5a" stroke-width="2.4" stroke-linecap="round"/></svg>
<div style="left:789px;top:203px;width:192px;height:21px;border:1px solid;border-color:#a0a0a0 #fff #fff #a0a0a0;box-shadow:inset 1px 1px #696969, inset -1px -1px #e3e3e3;background:#f0f0f0;"></div>
<div class="t" style="left:792.00px;top:208.19px;font-size:11px;color:#000;transform:scaleX(0.9300);transform-origin:0 0;">-</div>
<div class="t" style="left:541.05px;top:228.69px;font-size:11px;color:#000;transform:scaleX(0.9500);transform-origin:0 0;">2º Reboque</div>
<div style="left:597px;top:224px;width:63px;height:21px;border:1px solid;border-color:#a0a0a0 #fff #fff #a0a0a0;box-shadow:inset 1px 1px #696969, inset -1px -1px #e3e3e3;background:#f0f0f0;"></div>
<div style="left:661px;top:224px;width:103px;height:21px;border:1px solid;border-color:#a0a0a0 #fff #fff #a0a0a0;box-shadow:inset 1px 1px #696969, inset -1px -1px #e3e3e3;background:#f0f0f0;"></div>
<div style="left:745px;top:226px;width:17px;height:17px;border:1px solid;border-color:#fff #696969 #696969 #fff;box-shadow:inset -1px -1px #a0a0a0, inset 1px 1px #e3e3e3;background:#f0f0f0;"></div>
<div style="left:749px;top:233px;width:0;height:0;border-left:4px solid transparent;border-right:4px solid transparent;border-top:4px solid #a0a0a0"></div>
<svg style="position:absolute;left:767px;top:226px" width="18" height="18" viewBox="0 0 18 18"><circle cx="7.5" cy="6.5" r="4.8" fill="#e9eded" stroke="#8e8e8e" stroke-width="1.4"/><path d="M11 10 L15.3 14.3" stroke="#5a5a5a" stroke-width="2.4" stroke-linecap="round"/></svg>
<div style="left:789px;top:224px;width:192px;height:21px;border:1px solid;border-color:#a0a0a0 #fff #fff #a0a0a0;box-shadow:inset 1px 1px #696969, inset -1px -1px #e3e3e3;background:#f0f0f0;"></div>
<div class="t" style="left:792.00px;top:229.19px;font-size:11px;color:#000;transform:scaleX(0.9300);transform-origin:0 0;">-</div>
<div class="t" style="left:541.05px;top:249.69px;font-size:11px;color:#000;transform:scaleX(0.9500);transform-origin:0 0;">3º Reboque</div>
<div style="left:597px;top:245px;width:63px;height:21px;border:1px solid;border-color:#a0a0a0 #fff #fff #a0a0a0;box-shadow:inset 1px 1px #696969, inset -1px -1px #e3e3e3;background:#f0f0f0;"></div>
<div style="left:661px;top:245px;width:103px;height:21px;border:1px solid;border-color:#a0a0a0 #fff #fff #a0a0a0;box-shadow:inset 1px 1px #696969, inset -1px -1px #e3e3e3;background:#f0f0f0;"></div>
<div style="left:745px;top:247px;width:17px;height:17px;border:1px solid;border-color:#fff #696969 #696969 #fff;box-shadow:inset -1px -1px #a0a0a0, inset 1px 1px #e3e3e3;background:#f0f0f0;"></div>
<div style="left:749px;top:254px;width:0;height:0;border-left:4px solid transparent;border-right:4px solid transparent;border-top:4px solid #a0a0a0"></div>
<svg style="position:absolute;left:767px;top:247px" width="18" height="18" viewBox="0 0 18 18"><circle cx="7.5" cy="6.5" r="4.8" fill="#e9eded" stroke="#8e8e8e" stroke-width="1.4"/><path d="M11 10 L15.3 14.3" stroke="#5a5a5a" stroke-width="2.4" stroke-linecap="round"/></svg>
<div style="left:789px;top:245px;width:192px;height:21px;border:1px solid;border-color:#a0a0a0 #fff #fff #a0a0a0;box-shadow:inset 1px 1px #696969, inset -1px -1px #e3e3e3;background:#f0f0f0;"></div>
<div style="left:1100px;top:116px;width:553px;height:1px;background:#ffffff"></div>
<div style="left:989px;top:96px;width:1px;height:600px;background:#ffffff"></div>
<div style="left:989px;top:96px;width:112px;height:21px;border-top:1px solid #fff;border-right:1px solid #696969"></div>
<div style="left:1099px;top:97px;width:1px;height:20px;background:#a0a0a0"></div>
<div class="t" style="left:996.00px;top:99.19px;font-size:11px;color:#000;transform:scaleX(0.9735);transform-origin:0 0;">Conhecimentos (F2)</div>
<div style="left:1101px;top:99px;width:52px;height:18px;border-top:1px solid #fff;border-right:1px solid #696969"></div>
<div style="left:1151px;top:100px;width:1px;height:17px;background:#a0a0a0"></div>
<div class="t" style="left:1105.00px;top:101.19px;font-size:11px;color:#000;transform:scaleX(0.9466);transform-origin:0 0;">CRT (F5)</div>
<div style="left:1153px;top:99px;width:141px;height:18px;border-top:1px solid #fff;border-right:1px solid #696969"></div>
<div style="left:1292px;top:100px;width:1px;height:17px;background:#a0a0a0"></div>
<div class="t" style="left:1160.00px;top:101.19px;font-size:11px;color:#000;transform:scaleX(0.9925);transform-origin:0 0;">Notas Fiscais Serviço (F3)</div>
<div style="left:1294px;top:99px;width:99px;height:18px;border-top:1px solid #fff;border-right:1px solid #696969"></div>
<div style="left:1391px;top:100px;width:1px;height:17px;background:#a0a0a0"></div>
<div class="t" style="left:1300.00px;top:101.19px;font-size:11px;color:#000;transform:scaleX(0.9862);transform-origin:0 0;">Notas Fiscais (F4)</div>
<div style="left:992px;top:126px;width:656px;height:1px;background:#a0a0a0"></div>
<div style="left:992px;top:126px;width:1px;height:298px;background:#a0a0a0"></div>
<div style="left:1647px;top:126px;width:1px;height:298px;background:#a0a0a0"></div>
<div style="left:1648px;top:126px;width:1px;height:299px;background:#ffffff"></div>
<div style="left:992px;top:424px;width:656px;height:1px;background:#a0a0a0"></div>
<div style="left:992px;top:425px;width:657px;height:1px;background:#ffffff"></div>
<div style="left:994px;top:136px;width:654px;height:240px;border:1px solid;border-color:#a0a0a0 #fff #fff #a0a0a0;box-shadow:inset 1px 1px #696969, inset -1px -1px #e3e3e3;background:#ffffe1;overflow:hidden"></div>
<div style="left:996px;top:138px;width:648px;height:18px;background:#f0f0f0"></div>
<div style="left:996px;top:138px;width:648px;height:1px;background:#ffffff"></div>
<div style="left:996px;top:156px;width:649px;height:1px;background:#000000"></div>
<div style="left:1009px;top:157px;width:636px;height:18px;background:#0078d7"></div>
<div style="left:996px;top:157px;width:12px;height:18px;background:#f0f0f0"></div>
<div style="left:996px;top:175px;width:13px;height:1px;background:#000000"></div>
<div style="left:996px;top:157px;width:12px;height:1px;background:#ffffff"></div>
<div style="left:996px;top:157px;width:1px;height:18px;background:#ffffff"></div>
<div style="left:1000px;top:160px;width:0;height:0;border-top:5px solid transparent;border-bottom:5px solid transparent;border-left:6px solid #000"></div>
<div style="left:1008px;top:138px;width:1px;height:18px;background:#000000"></div>
<div style="left:1009px;top:138px;width:1px;height:18px;background:#ffffff"></div>
<div style="left:1008px;top:157px;width:1px;height:18px;background:#000000"></div>
<div style="left:1045px;top:138px;width:1px;height:18px;background:#000000"></div>
<div style="left:1046px;top:138px;width:1px;height:18px;background:#ffffff"></div>
<div style="left:1045px;top:157px;width:1px;height:18px;background:#b4c8dc"></div>
<div style="left:1111px;top:138px;width:1px;height:18px;background:#000000"></div>
<div style="left:1112px;top:138px;width:1px;height:18px;background:#ffffff"></div>
<div style="left:1111px;top:157px;width:1px;height:18px;background:#b4c8dc"></div>
<div style="left:1223px;top:138px;width:1px;height:18px;background:#000000"></div>
<div style="left:1224px;top:138px;width:1px;height:18px;background:#ffffff"></div>
<div style="left:1223px;top:157px;width:1px;height:18px;background:#b4c8dc"></div>
<div style="left:1288px;top:138px;width:1px;height:18px;background:#000000"></div>
<div style="left:1289px;top:138px;width:1px;height:18px;background:#ffffff"></div>
<div style="left:1288px;top:157px;width:1px;height:18px;background:#b4c8dc"></div>
<div style="left:1378px;top:138px;width:1px;height:18px;background:#000000"></div>
<div style="left:1379px;top:138px;width:1px;height:18px;background:#ffffff"></div>
<div style="left:1378px;top:157px;width:1px;height:18px;background:#b4c8dc"></div>
<div style="left:1506px;top:138px;width:1px;height:18px;background:#000000"></div>
<div style="left:1507px;top:138px;width:1px;height:18px;background:#ffffff"></div>
<div style="left:1506px;top:157px;width:1px;height:18px;background:#b4c8dc"></div>
<div style="left:1598px;top:138px;width:1px;height:18px;background:#000000"></div>
<div style="left:1599px;top:138px;width:1px;height:18px;background:#ffffff"></div>
<div style="left:1598px;top:157px;width:1px;height:18px;background:#b4c8dc"></div>
<div style="left:1644px;top:138px;width:1px;height:18px;background:#a0a0a0"></div>
<div style="left:1644px;top:157px;width:1px;height:18px;background:#b4c8dc"></div>
<div style="left:996px;top:138px;width:1px;height:18px;background:#ffffff"></div>
<div style="left:1010px;top:138px;width:1px;height:18px;background:#000000"></div>
<div style="left:1010px;top:157px;width:1px;height:18px;background:#c8d8e8"></div>
<div class="t" style="left:1018.14px;top:141.69px;font-size:11px;color:#000;transform:scaleX(0.9600);transform-origin:0 0;">Emp</div>
<div class="t" style="left:1054.09px;top:141.69px;font-size:11px;color:#000;transform:scaleX(0.9600);transform-origin:0 0;">Nº Conhec</div>
<div class="t" style="left:1148.25px;top:141.69px;font-size:11px;color:#000;transform:scaleX(0.9600);transform-origin:0 0;">Emissão</div>
<div class="t" style="left:1226.00px;top:141.69px;font-size:11px;color:#000;transform:scaleX(0.9600);transform-origin:0 0;">Percurso</div>
<div class="t" style="left:1291.00px;top:141.69px;font-size:11px;color:#000;transform:scaleX(0.9600);transform-origin:0 0;">Usuário Cadastro</div>
<div class="t" style="left:1409.46px;top:141.69px;font-size:11px;color:#000;transform:scaleX(0.9600);transform-origin:0 0;">Data Cadastro</div>
<div class="t" style="left:1509.00px;top:141.69px;font-size:11px;color:#000;transform:scaleX(0.9600);transform-origin:0 0;">Usuário Alteração</div>
<div class="t" style="left:1601.00px;top:141.69px;font-size:11px;color:#000;transform:scaleX(0.9600);transform-origin:0 0;">ta Alteraç</div>
<div class="t" style="left:1036.13px;top:160.69px;font-size:11px;color:#fff;transform:scaleX(0.9600);transform-origin:0 0;">1</div>
<div class="t" style="left:1066.89px;top:160.69px;font-size:11px;color:#fff;transform:scaleX(0.9600);transform-origin:0 0;">2566335</div>
<div class="t" style="left:1142.58px;top:160.69px;font-size:11px;color:#fff;transform:scaleX(0.9600);transform-origin:0 0;">09/06/2019</div>
<div class="t" style="left:1227.00px;top:160.69px;font-size:11px;color:#fff;transform:scaleX(0.9600);transform-origin:0 0;">CXS/4CE</div>
<div class="t" style="left:1292.00px;top:160.69px;font-size:11px;color:#fff;transform:scaleX(0.9600);transform-origin:0 0;">SOFTRAN</div>
<div class="t" style="left:1402.90px;top:160.69px;font-size:11px;color:#fff;transform:scaleX(0.9600);transform-origin:0 0;">10/06/2019 10:41</div>
<div style="left:993px;top:133px;width:656px;height:52px;border:3px solid #003d00;border-radius:1px"></div>
<div style="left:996px;top:355px;width:652px;height:18px;background:#f0f0f0"></div>
<svg style="position:absolute;left:1632px;top:359px" width="8" height="10" viewBox="0 0 8 10"><path d="M2 1 L6 5 L2 9" stroke="#606060" stroke-width="1.6" fill="none"/></svg>
<div style="left:1547px;top:430px;width:104px;height:1px;background:#696969"></div>
<div style="left:1547px;top:431px;width:103px;height:1px;background:#a0a0a0"></div>
<div style="left:1547px;top:486px;width:102px;height:89px;border:1px solid #a0a0a0;border-left:none;box-shadow:1px 1px #fff"></div>
<div style="left:1547px;top:514px;width:101px;height:60px;background:#ffffe1;border-top:2px solid #696969;border-right:1px solid #fff;border-bottom:1px solid #fff"></div>
<div style="left:1547px;top:582px;width:102px;height:116px;border:1px solid #a0a0a0;border-left:none;box-shadow:1px 1px #fff"></div>
<div style="left:395px;top:253px;width:1152px;height:600px;background:#f0f0f0;box-shadow:0 0 9px 2px rgba(0,0,0,0.28)"></div>
<div style="left:395px;top:253px;width:1152px;height:26px;background:#fff"></div>
<div class="t" style="left:398.00px;top:259.24px;font-size:12px;color:#8d8d8d;transform:scaleX(0.9976);transform-origin:0 0;">Consulta Padrão - Conhecimento</div>
<div style="left:1527px;top:255px;width:19px;height:19px;background:#e3e3e3"></div>
<svg style="position:absolute;left:1533px;top:261px" width="7" height="7" viewBox="0 0 7 7"><path d="M1 1 L6 6 M6 1 L1 6" stroke="#fbfbfb" stroke-width="1.3"/></svg>
<div style="left:400px;top:281px;width:20px;height:28px;background:#f0f0f0;border:1px solid;border-color:#fff #696969 #696969 #fff;box-shadow:inset -1px -1px #a0a0a0"></div>
<svg style="position:absolute;left:400px;top:281px" width="20" height="28" viewBox="0 0 20 28"><path d="M5.5 15 L15 19 M15 11 V19" stroke="#ffffff" stroke-width="1.3" fill="none"/><path d="M4.5 10.5 V18.5 M6 14.5 L15 10" stroke="#8c8c8c" stroke-width="1.1" fill="none"/></svg>
<div style="left:420px;top:281px;width:20px;height:28px;background:#f0f0f0;border:1px solid;border-color:#fff #696969 #696969 #fff;box-shadow:inset -1px -1px #a0a0a0"></div>
<svg style="position:absolute;left:420px;top:281px" width="20" height="28" viewBox="0 0 20 28"><path d="M5.5 14.5 L14.5 19 M14.5 11 V19" stroke="#ffffff" stroke-width="1.3" fill="none"/><path d="M5 14.5 L14.5 10" stroke="#8c8c8c" stroke-width="1.1" fill="none"/></svg>
<div style="left:440px;top:281px;width:20px;height:28px;background:#f0f0f0;border:1px solid;border-color:#fff #696969 #696969 #fff;box-shadow:inset -1px -1px #a0a0a0"></div>
<svg style="position:absolute;left:440px;top:281px" width="20" height="28" viewBox="0 0 20 28"><path d="M5.5 19 L14.5 14.5 M6 19.5 H5" stroke="#ffffff" stroke-width="1.3" fill="none"/><path d="M5 10 V18.5 M5 10 L14.5 14.5" stroke="#8c8c8c" stroke-width="1.1" fill="none"/></svg>
<div style="left:460px;top:281px;width:20px;height:28px;background:#f0f0f0;border:1px solid;border-color:#fff #696969 #696969 #fff;box-shadow:inset -1px -1px #a0a0a0"></div>
<svg style="position:absolute;left:460px;top:281px" width="20" height="28" viewBox="0 0 20 28"><path d="M4.5 19 L12 15 M13.5 19 V15" stroke="#ffffff" stroke-width="1.3" fill="none"/><path d="M4 10 V18.5 M4 10 L12 14.5 M12.5 10 H14 M12.5 10 V18" stroke="#8c8c8c" stroke-width="1.1" fill="none"/></svg>
<div style="left:491px;top:281px;width:35px;height:28px;background:#f0f0f0;border:1px solid;border-color:#fff #696969 #696969 #fff;box-shadow:inset -1px -1px #a0a0a0"></div>
<svg style="position:absolute;left:491px;top:281px" width="35" height="28" viewBox="0 0 35 28"><path d="M12 9.5 H17 L21.5 14 V19.5 H12 Z" fill="#fff" stroke="#505050" stroke-width="1.3"/><path d="M17.5 13 L25 6 M8.5 7 L12 10 M8.5 15 H12 M9.5 22 L12 19.5 M16.5 19.5 V22.5 M21.5 19.5 L25 22.5 M21.5 15 H25" stroke="#505050" stroke-width="1.3"/></svg>
<div style="left:527px;top:281px;width:35px;height:28px;background:#f0f0f0;border:1px solid;border-color:#fff #696969 #696969 #fff;box-shadow:inset -1px -1px #a0a0a0"></div>
<svg style="position:absolute;left:527px;top:281px" width="35" height="28" viewBox="0 0 35 28"><path d="M16 7 H22 L25 10 V22 H16 Z" fill="#f4f4f4" stroke="#505050" stroke-width="1.2"/><path d="M18 11 H23 M19 14 H23 M19 17 H23 M19 20 H23" stroke="#505050" stroke-dasharray="1.5 1"/><path d="M10 14 H15 L19 16 L18 19 H15 L14 21 H10 Z" fill="#cfcfcf" stroke="#505050" stroke-width="1.3"/><path d="M13 5 L24 18" stroke="#505050" stroke-width="1.4"/></svg>
<div style="left:563px;top:281px;width:35px;height:28px;background:#f0f0f0;border:1px solid;border-color:#fff #696969 #696969 #fff;box-shadow:inset -1px -1px #a0a0a0"></div>
<svg style="position:absolute;left:563px;top:281px" width="35" height="28" viewBox="0 0 35 28"><circle cx="18" cy="13.5" r="7" fill="none" stroke="#505050" stroke-width="1.8"/><path d="M19 7 L17.5 13 L15 19" stroke="#505050" stroke-width="2"/><path d="M14.5 17 L17 20 M19.5 6.5 L20.5 9" stroke="#505050" stroke-width="1.2"/></svg>
<div style="left:607px;top:281px;width:35px;height:28px;background:#f0f0f0;border:1px solid;border-color:#fff #696969 #696969 #fff;box-shadow:inset -1px -1px #a0a0a0"></div>
<svg style="position:absolute;left:607px;top:281px" width="35" height="28" viewBox="0 0 35 28"><path d="M11 14.5 L15.5 19.5 L25 8" stroke="#8a8a8a" stroke-width="3.2" fill="none" stroke-linejoin="round" stroke-linecap="round"/><path d="M11 14.5 L15.5 19.5 L25 8" stroke="#f4f4f4" stroke-width="1.4" fill="none" stroke-linejoin="round" stroke-linecap="round"/></svg>
<div style="left:642px;top:281px;width:35px;height:28px;background:#f0f0f0;border:1px solid;border-color:#fff #696969 #696969 #fff;box-shadow:inset -1px -1px #a0a0a0"></div>
<svg style="position:absolute;left:642px;top:281px" width="35" height="28" viewBox="0 0 35 28"><path d="M12 8 L24 20 M24 8 L12 20" stroke="#8a8a8a" stroke-width="3.4" stroke-linecap="round"/><path d="M12 8 L24 20 M24 8 L12 20" stroke="#f4f4f4" stroke-width="1.6" stroke-linecap="round"/></svg>
<div style="left:702px;top:281px;width:35px;height:28px;background:#f0f0f0;border:1px solid;border-color:#fff #696969 #696969 #fff;box-shadow:inset -1px -1px #a0a0a0"></div>
<svg style="position:absolute;left:702px;top:281px" width="35" height="28" viewBox="0 0 35 28"><path d="M13 8 H20 L22 10 V14 H13 Z" fill="#fff" stroke="#505050"/><path d="M9 14 H26 V20 H9 Z" fill="#fff" stroke="#505050" stroke-width="1.3"/><path d="M11 20 H24 V22 H11 Z" fill="#ccc" stroke="#505050"/></svg>
<div style="left:758px;top:281px;width:35px;height:28px;background:#f0f0f0;border:1px solid #000;box-shadow:inset 1px 1px #fff, inset -2px -2px #696969"></div>
<svg style="position:absolute;left:758px;top:281px" width="35" height="28" viewBox="0 0 35 28"><rect x="12" y="6" width="11" height="18" fill="#7a0a0a" stroke="#111"/><rect x="14" y="8" width="7" height="4" fill="#3ad0f0"/><rect x="20" y="15" width="1.5" height="1.5" fill="#ff0"/></svg>
<div class="t" style="left:800.00px;top:287.48px;font-size:15.5px;color:#7f7f7f;transform:scaleX(0.9507);transform-origin:0 0;font-weight:bold;">Inciada Descarga Filial Destino</div>
<div style="left:1047px;top:284px;width:135px;height:24px;background:#f0f0f0;border:1px solid;border-color:#fff #696969 #696969 #fff;box-shadow:inset -1px -1px #a0a0a0"></div>
<svg style="position:absolute;left:1057px;top:287px" width="17" height="17" viewBox="0 0 17 17"><rect x="2" y="2" width="12" height="9" fill="none" stroke="#9a9a9a" stroke-width="1.2"/><rect x="4" y="4" width="8" height="5" fill="none" stroke="#b0b0b0"/><path d="M5 15 H12 M8 11 V14" stroke="#9a9a9a" stroke-width="1.2"/></svg>
<div class="t" style="left:1078.00px;top:290.69px;font-size:11px;color:#8a8a8a;transform:scaleX(0.9938);transform-origin:0 0;">Consulta Avançada</div>
<div class="t" style="left:400.00px;top:310.69px;font-size:11px;color:#000;transform:scaleX(0.9542);transform-origin:0 0;">Empresa</div>
<div class="t" style="left:641.00px;top:310.69px;font-size:11px;color:#000;transform:scaleX(0.9930);transform-origin:0 0;">Nº Docto Fiscal</div>
<div class="t" style="left:724.00px;top:310.69px;font-size:11px;color:#000;transform:scaleX(0.9637);transform-origin:0 0;">Tipo Documento Fiscal</div>
<div class="t" style="left:984.00px;top:310.69px;font-size:11px;color:#000;transform:scaleX(0.9042);transform-origin:0 0;">NSU</div>
<div class="t" style="left:1085.00px;top:310.69px;font-size:11px;color:#000;transform:scaleX(0.9732);transform-origin:0 0;">Série/SubSérie</div>
<div style="left:400px;top:323px;width:36px;height:22px;border:1px solid;border-color:#a0a0a0 #fff #fff #a0a0a0;box-shadow:inset 1px 1px #696969, inset -1px -1px #e3e3e3;background:#fff;"></div>
<div class="t" style="left:426.31px;top:328.69px;font-size:11px;color:#555;transform:scaleX(0.9300);transform-origin:0 0;">1</div>
<div style="left:437px;top:322px;width:162px;height:22px;border:1px solid;border-color:#a0a0a0 #fff #fff #a0a0a0;box-shadow:inset 1px 1px #696969, inset -1px -1px #e3e3e3;background:#ffffe1;"></div>
<div style="left:580px;top:324px;width:17px;height:18px;border:1px solid;border-color:#fff #696969 #696969 #fff;box-shadow:inset -1px -1px #a0a0a0, inset 1px 1px #e3e3e3;background:#f0f0f0;"></div>
<div style="left:584px;top:332px;width:0;height:0;border-left:4px solid transparent;border-right:4px solid transparent;border-top:4px solid #a0a0a0"></div>
<div style="left:641px;top:322px;width:74px;height:22px;border:1px solid;border-color:#a0a0a0 #fff #fff #a0a0a0;box-shadow:inset 1px 1px #696969, inset -1px -1px #e3e3e3;background:#fff;"></div>
<div class="t" style="left:671.18px;top:327.69px;font-size:11px;color:#7a7a7a;transform:scaleX(0.9300);transform-origin:0 0;">2566335</div>
<div style="left:724px;top:322px;width:57px;height:22px;border:1px solid;border-color:#a0a0a0 #fff #fff #a0a0a0;box-shadow:inset 1px 1px #696969, inset -1px -1px #e3e3e3;background:#fff;"></div>
<div class="t" style="left:765.62px;top:327.69px;font-size:11px;color:#555;transform:scaleX(0.9300);transform-origin:0 0;">57</div>
<div style="left:781px;top:322px;width:151px;height:22px;border:1px solid;border-color:#a0a0a0 #fff #fff #a0a0a0;box-shadow:inset 1px 1px #696969, inset -1px -1px #e3e3e3;background:#ffffe1;"></div>
<div style="left:913px;top:324px;width:17px;height:18px;border:1px solid;border-color:#fff #696969 #696969 #fff;box-shadow:inset -1px -1px #a0a0a0, inset 1px 1px #e3e3e3;background:#f0f0f0;"></div>
<div style="left:917px;top:332px;width:0;height:0;border-left:4px solid transparent;border-right:4px solid transparent;border-top:4px solid #a0a0a0"></div>
<div class="t" style="left:784.00px;top:327.69px;font-size:11px;color:#7a7a7a;transform:scaleX(0.9300);transform-origin:0 0;">Conhecimento Eletronico</div>
<div style="left:984px;top:322px;width:74px;height:22px;border:1px solid;border-color:#a0a0a0 #fff #fff #a0a0a0;box-shadow:inset 1px 1px #696969, inset -1px -1px #e3e3e3;background:#f0f0f0;"></div>
<div class="t" style="left:997.11px;top:327.69px;font-size:11px;color:#7a7a7a;transform:scaleX(0.9300);transform-origin:0 0;">0000000000</div>
<div style="left:1086px;top:322px;width:71px;height:22px;border:1px solid;border-color:#a0a0a0 #fff #fff #a0a0a0;box-shadow:inset 1px 1px #696969, inset -1px -1px #e3e3e3;background:#f0f0f0;"></div>
<div class="t" style="left:1089.00px;top:327.69px;font-size:11px;color:#7a7a7a;transform:scaleX(0.9300);transform-origin:0 0;">0   -</div>
<div style="left:395px;top:347px;width:1151px;height:1px;background:#a0a0a0"></div>
<div style="left:395px;top:348px;width:1151px;height:1px;background:#ffffff"></div>
<div style="left:397px;top:370px;width:263px;height:1px;background:#ffffff"></div>
<div style="left:819px;top:370px;width:727px;height:1px;background:#ffffff"></div>
<div style="left:397px;top:349px;width:1px;height:474px;background:#ffffff"></div>
<div style="left:1546px;top:279px;width:1px;height:544px;background:#8a8a8a"></div>
<div style="left:1546px;top:370px;width:1px;height:460px;background:#696969"></div>
<div style="left:1545px;top:371px;width:1px;height:459px;background:#a0a0a0"></div>
<div style="left:397px;top:351px;width:80px;height:19px;border-top:1px solid #fff;border-left:1px solid #fff;border-right:1px solid #696969"></div>
<div style="left:475px;top:352px;width:1px;height:18px;background:#a0a0a0"></div>
<div class="t" style="left:403.00px;top:354.69px;font-size:11px;color:#000;transform:scaleX(0.9587);transform-origin:0 0;">Conhecimento</div>
<div style="left:477px;top:351px;width:182px;height:19px;border-top:1px solid #fff;border-left:1px solid #fff;border-right:1px solid #696969"></div>
<div style="left:657px;top:352px;width:1px;height:18px;background:#a0a0a0"></div>
<div class="t" style="left:483.00px;top:354.69px;font-size:11px;color:#000;transform:scaleX(0.9814);transform-origin:0 0;">Alterações Feitas no Conhecimento</div>
<div style="left:659px;top:348px;width:161px;height:23px;background:#f0f0f0;border-top:1px solid #fff;border-left:1px solid #fff;border-right:1px solid #696969"></div>
<div style="left:818px;top:349px;width:1px;height:21px;background:#a0a0a0"></div>
<div class="t" style="left:666.00px;top:352.19px;font-size:11px;color:#000;transform:scaleX(0.9841);transform-origin:0 0;">Manifestos, Faturas e Entrega</div>
<div style="left:820px;top:351px;width:57px;height:19px;border-top:1px solid #fff;border-right:1px solid #696969"></div>
<div style="left:875px;top:352px;width:1px;height:18px;background:#a0a0a0"></div>
<div class="t" style="left:829.00px;top:354.69px;font-size:11px;color:#000;transform:scaleX(0.9694);transform-origin:0 0;">Outros</div>
<div style="left:400px;top:383px;width:1143px;height:58px;border:1px solid #fff"></div>
<div style="left:399px;top:382px;width:1143px;height:58px;border:1px solid #a0a0a0"></div>
<div style="left:406px;top:376px;width:110px;height:12px;background:#f0f0f0"></div>
<div class="t" style="left:407.00px;top:377.69px;font-size:11px;color:#14148a;transform:scaleX(0.9511);transform-origin:0 0;">Romaneios de Entrega</div>
<div style="left:400px;top:451px;width:1143px;height:152px;border:1px solid #fff"></div>
<div style="left:399px;top:450px;width:1143px;height:152px;border:1px solid #a0a0a0"></div>
<div style="left:406px;top:444px;width:109px;height:12px;background:#f0f0f0"></div>
<div class="t" style="left:407.00px;top:445.69px;font-size:11px;color:#14148a;transform:scaleX(0.9579);transform-origin:0 0;">Movimento de Entrega</div>
<div style="left:400px;top:613px;width:1143px;height:62px;border:1px solid #fff"></div>
<div style="left:399px;top:612px;width:1143px;height:62px;border:1px solid #a0a0a0"></div>
<div style="left:406px;top:606px;width:56px;height:12px;background:#f0f0f0"></div>
<div class="t" style="left:407.00px;top:607.69px;font-size:11px;color:#14148a;transform:scaleX(0.9965);transform-origin:0 0;">Manifestos</div>
<div style="left:400px;top:685px;width:1143px;height:62px;border:1px solid #fff"></div>
<div style="left:399px;top:684px;width:1143px;height:62px;border:1px solid #a0a0a0"></div>
<div style="left:406px;top:678px;width:39px;height:12px;background:#f0f0f0"></div>
<div class="t" style="left:407.00px;top:679.69px;font-size:11px;color:#14148a;transform:scaleX(0.9653);transform-origin:0 0;">Coletas</div>
<div style="left:400px;top:757px;width:1143px;height:79px;border:1px solid #fff"></div>
<div style="left:399px;top:756px;width:1143px;height:79px;border:1px solid #a0a0a0"></div>
<div style="left:406px;top:750px;width:67px;height:12px;background:#f0f0f0"></div>
<div class="t" style="left:407.00px;top:751.69px;font-size:11px;color:#14148a;transform:scaleX(0.9695);transform-origin:0 0;">Notas Fiscais</div>
<div style="left:401px;top:392px;width:1140px;height:48px;border:1px solid;border-color:#a0a0a0 #fff #fff #a0a0a0;box-shadow:inset 1px 1px #696969, inset -1px -1px #e3e3e3;background:#ffffe1;overflow:hidden"></div>
<div style="left:402px;top:394px;width:475px;height:18px;background:#f0f0f0"></div>
<div style="left:402px;top:394px;width:475px;height:1px;background:#ffffff"></div>
<div style="left:402px;top:412px;width:476px;height:1px;background:#000000"></div>
<div style="left:415px;top:413px;width:463px;height:18px;background:#0078d7"></div>
<div style="left:402px;top:413px;width:12px;height:18px;background:#f0f0f0"></div>
<div style="left:402px;top:431px;width:13px;height:1px;background:#000000"></div>
<div style="left:402px;top:413px;width:12px;height:1px;background:#ffffff"></div>
<div style="left:402px;top:413px;width:1px;height:18px;background:#ffffff"></div>
<div style="left:406px;top:416px;width:0;height:0;border-top:5px solid transparent;border-bottom:5px solid transparent;border-left:6px solid #000"></div>
<div style="left:414px;top:394px;width:1px;height:18px;background:#000000"></div>
<div style="left:415px;top:394px;width:1px;height:18px;background:#ffffff"></div>
<div style="left:414px;top:413px;width:1px;height:18px;background:#000000"></div>
<div style="left:496px;top:394px;width:1px;height:18px;background:#000000"></div>
<div style="left:497px;top:394px;width:1px;height:18px;background:#ffffff"></div>
<div style="left:496px;top:413px;width:1px;height:18px;background:#b4c8dc"></div>
<div style="left:665px;top:394px;width:1px;height:18px;background:#000000"></div>
<div style="left:666px;top:394px;width:1px;height:18px;background:#ffffff"></div>
<div style="left:665px;top:413px;width:1px;height:18px;background:#b4c8dc"></div>
<div style="left:730px;top:394px;width:1px;height:18px;background:#000000"></div>
<div style="left:731px;top:394px;width:1px;height:18px;background:#ffffff"></div>
<div style="left:730px;top:413px;width:1px;height:18px;background:#b4c8dc"></div>
<div style="left:794px;top:394px;width:1px;height:18px;background:#000000"></div>
<div style="left:795px;top:394px;width:1px;height:18px;background:#ffffff"></div>
<div style="left:794px;top:413px;width:1px;height:18px;background:#b4c8dc"></div>
<div style="left:824px;top:394px;width:1px;height:18px;background:#000000"></div>
<div style="left:825px;top:394px;width:1px;height:18px;background:#ffffff"></div>
<div style="left:824px;top:413px;width:1px;height:18px;background:#b4c8dc"></div>
<div style="left:877px;top:394px;width:1px;height:18px;background:#000000"></div>
<div style="left:877px;top:413px;width:1px;height:18px;background:#b4c8dc"></div>
<div style="left:402px;top:394px;width:1px;height:18px;background:#ffffff"></div>
<div style="left:416px;top:394px;width:1px;height:18px;background:#000000"></div>
<div style="left:416px;top:413px;width:1px;height:18px;background:#c8d8e8"></div>
<div class="t" style="left:419.00px;top:397.69px;font-size:11px;color:#000;transform:scaleX(0.9600);transform-origin:0 0;">Empresa</div>
<div class="t" style="left:499.00px;top:397.69px;font-size:11px;color:#000;transform:scaleX(0.9600);transform-origin:0 0;">Rota</div>
<div class="t" style="left:668.00px;top:397.69px;font-size:11px;color:#000;transform:scaleX(0.9600);transform-origin:0 0;">Romaneio</div>
<div class="t" style="left:733.00px;top:397.69px;font-size:11px;color:#000;transform:scaleX(0.9600);transform-origin:0 0;">Data</div>
<div class="t" style="left:797.00px;top:397.69px;font-size:11px;color:#000;transform:scaleX(0.9600);transform-origin:0 0;">Hora</div>
<div class="t" style="left:827.00px;top:397.69px;font-size:11px;color:#000;transform:scaleX(0.9600);transform-origin:0 0;">Placa</div>
<div style="left:401px;top:460px;width:1140px;height:142px;border:1px solid;border-color:#a0a0a0 #fff #fff #a0a0a0;box-shadow:inset 1px 1px #696969, inset -1px -1px #e3e3e3;background:#ffffe1;overflow:hidden"></div>
<div style="left:402px;top:462px;width:1136px;height:18px;background:#f0f0f0"></div>
<div style="left:402px;top:462px;width:1136px;height:1px;background:#ffffff"></div>
<div style="left:402px;top:480px;width:1137px;height:1px;background:#000000"></div>
<div style="left:415px;top:481px;width:1124px;height:18px;background:#0078d7"></div>
<div style="left:402px;top:481px;width:12px;height:18px;background:#f0f0f0"></div>
<div style="left:402px;top:499px;width:13px;height:1px;background:#000000"></div>
<div style="left:402px;top:481px;width:12px;height:1px;background:#ffffff"></div>
<div style="left:402px;top:481px;width:1px;height:18px;background:#ffffff"></div>
<div style="left:406px;top:484px;width:0;height:0;border-top:5px solid transparent;border-bottom:5px solid transparent;border-left:6px solid #000"></div>
<div style="left:414px;top:462px;width:1px;height:18px;background:#000000"></div>
<div style="left:415px;top:462px;width:1px;height:18px;background:#ffffff"></div>
<div style="left:414px;top:481px;width:1px;height:18px;background:#000000"></div>
<div style="left:502px;top:462px;width:1px;height:18px;background:#000000"></div>
<div style="left:503px;top:462px;width:1px;height:18px;background:#ffffff"></div>
<div style="left:502px;top:481px;width:1px;height:18px;background:#b4c8dc"></div>
<div style="left:546px;top:462px;width:1px;height:18px;background:#000000"></div>
<div style="left:547px;top:462px;width:1px;height:18px;background:#ffffff"></div>
<div style="left:546px;top:481px;width:1px;height:18px;background:#b4c8dc"></div>
<div style="left:605px;top:462px;width:1px;height:18px;background:#000000"></div>
<div style="left:606px;top:462px;width:1px;height:18px;background:#ffffff"></div>
<div style="left:605px;top:481px;width:1px;height:18px;background:#b4c8dc"></div>
<div style="left:792px;top:462px;width:1px;height:18px;background:#000000"></div>
<div style="left:793px;top:462px;width:1px;height:18px;background:#ffffff"></div>
<div style="left:792px;top:481px;width:1px;height:18px;background:#b4c8dc"></div>
<div style="left:958px;top:462px;width:1px;height:18px;background:#000000"></div>
<div style="left:959px;top:462px;width:1px;height:18px;background:#ffffff"></div>
<div style="left:958px;top:481px;width:1px;height:18px;background:#b4c8dc"></div>
<div style="left:1034px;top:462px;width:1px;height:18px;background:#000000"></div>
<div style="left:1035px;top:462px;width:1px;height:18px;background:#ffffff"></div>
<div style="left:1034px;top:481px;width:1px;height:18px;background:#b4c8dc"></div>
<div style="left:1108px;top:462px;width:1px;height:18px;background:#000000"></div>
<div style="left:1109px;top:462px;width:1px;height:18px;background:#ffffff"></div>
<div style="left:1108px;top:481px;width:1px;height:18px;background:#b4c8dc"></div>
<div style="left:1197px;top:462px;width:1px;height:18px;background:#000000"></div>
<div style="left:1198px;top:462px;width:1px;height:18px;background:#ffffff"></div>
<div style="left:1197px;top:481px;width:1px;height:18px;background:#b4c8dc"></div>
<div style="left:1442px;top:462px;width:1px;height:18px;background:#000000"></div>
<div style="left:1443px;top:462px;width:1px;height:18px;background:#ffffff"></div>
<div style="left:1442px;top:481px;width:1px;height:18px;background:#b4c8dc"></div>
<div style="left:1538px;top:462px;width:1px;height:18px;background:#a0a0a0"></div>
<div style="left:1538px;top:481px;width:1px;height:18px;background:#b4c8dc"></div>
<div style="left:402px;top:462px;width:1px;height:18px;background:#ffffff"></div>
<div style="left:416px;top:462px;width:1px;height:18px;background:#000000"></div>
<div style="left:416px;top:481px;width:1px;height:18px;background:#c8d8e8"></div>
<div class="t" style="left:419.00px;top:465.69px;font-size:11px;color:#000;transform:scaleX(0.9600);transform-origin:0 0;">Data Movimento</div>
<div class="t" style="left:514.06px;top:465.69px;font-size:11px;color:#000;transform:scaleX(0.9600);transform-origin:0 0;">Hora</div>
<div class="t" style="left:549.00px;top:465.69px;font-size:11px;color:#000;transform:scaleX(0.9600);transform-origin:0 0;">Ocorrência</div>
<div class="t" style="left:608.00px;top:465.69px;font-size:11px;color:#000;transform:scaleX(0.9600);transform-origin:0 0;">Descrição</div>
<div class="t" style="left:795.00px;top:465.69px;font-size:11px;color:#000;transform:scaleX(0.9600);transform-origin:0 0;">Entregue</div>
<div class="t" style="left:961.00px;top:465.69px;font-size:11px;color:#000;transform:scaleX(0.9600);transform-origin:0 0;">Data Digitação</div>
<div class="t" style="left:1037.00px;top:465.69px;font-size:11px;color:#000;transform:scaleX(0.9600);transform-origin:0 0;">Agendamento</div>
<div class="t" style="left:1111.00px;top:465.69px;font-size:11px;color:#000;transform:scaleX(0.9600);transform-origin:0 0;">Filial Entrega</div>
<div class="t" style="left:1200.00px;top:465.69px;font-size:11px;color:#000;transform:scaleX(0.9600);transform-origin:0 0;">Contato</div>
<div class="t" style="left:1445.00px;top:465.69px;font-size:11px;color:#000;transform:scaleX(0.9600);transform-origin:0 0;">Fone Contato</div>
<div class="t" style="left:420.00px;top:484.69px;font-size:11px;color:#fff;transform:scaleX(0.9600);transform-origin:0 0;">10/06/2019</div>
<div class="t" style="left:506.00px;top:484.69px;font-size:11px;color:#fff;transform:scaleX(0.9600);transform-origin:0 0;">10:39</div>
<div class="t" style="left:584.38px;top:484.69px;font-size:11px;color:#fff;transform:scaleX(0.9600);transform-origin:0 0;">106</div>
<div class="t" style="left:609.00px;top:484.69px;font-size:11px;color:#fff;transform:scaleX(0.9238);transform-origin:0 0;">INICIADA DESCARGA NO DEPOSITO</div>
<div class="t" style="left:796.00px;top:484.69px;font-size:11px;color:#fff;transform:scaleX(0.9600);transform-origin:0 0;">Não entregue</div>
<div class="t" style="left:962.00px;top:484.69px;font-size:11px;color:#fff;transform:scaleX(0.9600);transform-origin:0 0;">10/06/2019</div>
<div class="t" style="left:1112.00px;top:484.69px;font-size:11px;color:#fff;transform:scaleX(0.9600);transform-origin:0 0;">001-CXS</div>
<div style="left:404px;top:583px;width:1135px;height:17px;background:#f0f0f0"></div>
<div style="left:420px;top:584px;width:17px;height:15px;background:#cdcdcd"></div>
<svg style="position:absolute;left:406px;top:587px" width="8" height="10" viewBox="0 0 8 10"><path d="M6 1 L2 5 L6 9" stroke="#606060" stroke-width="1.6" fill="none"/></svg>
<svg style="position:absolute;left:1526px;top:587px" width="8" height="10" viewBox="0 0 8 10"><path d="M2 1 L6 5 L2 9" stroke="#606060" stroke-width="1.6" fill="none"/></svg>
<div style="left:401px;top:622px;width:1140px;height:52px;border:1px solid;border-color:#a0a0a0 #fff #fff #a0a0a0;box-shadow:inset 1px 1px #696969, inset -1px -1px #e3e3e3;background:#ffffe1;overflow:hidden"></div>
<div style="left:402px;top:624px;width:511px;height:18px;background:#f0f0f0"></div>
<div style="left:402px;top:624px;width:511px;height:1px;background:#ffffff"></div>
<div style="left:402px;top:642px;width:512px;height:1px;background:#000000"></div>
<div style="left:415px;top:643px;width:499px;height:18px;background:#0078d7"></div>
<div style="left:402px;top:643px;width:12px;height:18px;background:#f0f0f0"></div>
<div style="left:402px;top:661px;width:13px;height:1px;background:#000000"></div>
<div style="left:402px;top:643px;width:12px;height:1px;background:#ffffff"></div>
<div style="left:402px;top:643px;width:1px;height:18px;background:#ffffff"></div>
<div style="left:406px;top:646px;width:0;height:0;border-top:5px solid transparent;border-bottom:5px solid transparent;border-left:6px solid #000"></div>
<div style="left:414px;top:624px;width:1px;height:18px;background:#000000"></div>
<div style="left:415px;top:624px;width:1px;height:18px;background:#ffffff"></div>
<div style="left:414px;top:643px;width:1px;height:18px;background:#000000"></div>
<div style="left:539px;top:624px;width:1px;height:18px;background:#000000"></div>
<div style="left:540px;top:624px;width:1px;height:18px;background:#ffffff"></div>
<div style="left:539px;top:643px;width:1px;height:18px;background:#b4c8dc"></div>
<div style="left:617px;top:624px;width:1px;height:18px;background:#000000"></div>
<div style="left:618px;top:624px;width:1px;height:18px;background:#ffffff"></div>
<div style="left:617px;top:643px;width:1px;height:18px;background:#b4c8dc"></div>
<div style="left:659px;top:624px;width:1px;height:18px;background:#000000"></div>
<div style="left:660px;top:624px;width:1px;height:18px;background:#ffffff"></div>
<div style="left:659px;top:643px;width:1px;height:18px;background:#b4c8dc"></div>
<div style="left:772px;top:624px;width:1px;height:18px;background:#000000"></div>
<div style="left:773px;top:624px;width:1px;height:18px;background:#ffffff"></div>
<div style="left:772px;top:643px;width:1px;height:18px;background:#b4c8dc"></div>
<div style="left:805px;top:624px;width:1px;height:18px;background:#000000"></div>
<div style="left:806px;top:624px;width:1px;height:18px;background:#ffffff"></div>
<div style="left:805px;top:643px;width:1px;height:18px;background:#b4c8dc"></div>
<div style="left:880px;top:624px;width:1px;height:18px;background:#000000"></div>
<div style="left:881px;top:624px;width:1px;height:18px;background:#ffffff"></div>
<div style="left:880px;top:643px;width:1px;height:18px;background:#b4c8dc"></div>
<div style="left:913px;top:624px;width:1px;height:18px;background:#000000"></div>
<div style="left:913px;top:643px;width:1px;height:18px;background:#b4c8dc"></div>
<div style="left:402px;top:624px;width:1px;height:18px;background:#ffffff"></div>
<div style="left:416px;top:624px;width:1px;height:18px;background:#000000"></div>
<div style="left:416px;top:643px;width:1px;height:18px;background:#c8d8e8"></div>
<div class="t" style="left:419.00px;top:627.69px;font-size:11px;color:#000;transform:scaleX(0.9600);transform-origin:0 0;">Número</div>
<div class="t" style="left:559.25px;top:627.69px;font-size:11px;color:#000;transform:scaleX(0.9600);transform-origin:0 0;">Emissão</div>
<div class="t" style="left:628.06px;top:627.69px;font-size:11px;color:#000;transform:scaleX(0.9600);transform-origin:0 0;">Hora</div>
<div class="t" style="left:662.00px;top:627.69px;font-size:11px;color:#000;transform:scaleX(0.9600);transform-origin:0 0;">Data Saída</div>
<div class="t" style="left:775.00px;top:627.69px;font-size:11px;color:#000;transform:scaleX(0.9600);transform-origin:0 0;">Hora</div>
<div class="t" style="left:808.00px;top:627.69px;font-size:11px;color:#000;transform:scaleX(0.9600);transform-origin:0 0;">Data Chegada</div>
<div class="t" style="left:883.00px;top:627.69px;font-size:11px;color:#000;transform:scaleX(0.9600);transform-origin:0 0;">Hora</div>
<div class="t" style="left:420.00px;top:646.69px;font-size:11px;color:#fff;transform:scaleX(0.9600);transform-origin:0 0;">CXS/CXS-0010010</div>
<div class="t" style="left:543.00px;top:646.69px;font-size:11px;color:#fff;transform:scaleX(0.9600);transform-origin:0 0;">10/06/2019</div>
<div class="t" style="left:621.00px;top:646.69px;font-size:11px;color:#fff;transform:scaleX(0.9600);transform-origin:0 0;">10:41</div>
<div style="left:401px;top:694px;width:1140px;height:52px;border:1px solid;border-color:#a0a0a0 #fff #fff #a0a0a0;box-shadow:inset 1px 1px #696969, inset -1px -1px #e3e3e3;background:#ffffe1;overflow:hidden"></div>
<div style="left:402px;top:696px;width:744px;height:18px;background:#f0f0f0"></div>
<div style="left:402px;top:696px;width:744px;height:1px;background:#ffffff"></div>
<div style="left:402px;top:714px;width:745px;height:1px;background:#000000"></div>
<div style="left:415px;top:715px;width:732px;height:18px;background:#0078d7"></div>
<div style="left:402px;top:715px;width:12px;height:18px;background:#f0f0f0"></div>
<div style="left:402px;top:733px;width:13px;height:1px;background:#000000"></div>
<div style="left:402px;top:715px;width:12px;height:1px;background:#ffffff"></div>
<div style="left:402px;top:715px;width:1px;height:18px;background:#ffffff"></div>
<div style="left:406px;top:718px;width:0;height:0;border-top:5px solid transparent;border-bottom:5px solid transparent;border-left:6px solid #000"></div>
<div style="left:414px;top:696px;width:1px;height:18px;background:#000000"></div>
<div style="left:415px;top:696px;width:1px;height:18px;background:#ffffff"></div>
<div style="left:414px;top:715px;width:1px;height:18px;background:#000000"></div>
<div style="left:479px;top:696px;width:1px;height:18px;background:#000000"></div>
<div style="left:480px;top:696px;width:1px;height:18px;background:#ffffff"></div>
<div style="left:479px;top:715px;width:1px;height:18px;background:#b4c8dc"></div>
<div style="left:665px;top:696px;width:1px;height:18px;background:#000000"></div>
<div style="left:666px;top:696px;width:1px;height:18px;background:#ffffff"></div>
<div style="left:665px;top:715px;width:1px;height:18px;background:#b4c8dc"></div>
<div style="left:730px;top:696px;width:1px;height:18px;background:#000000"></div>
<div style="left:731px;top:696px;width:1px;height:18px;background:#ffffff"></div>
<div style="left:730px;top:715px;width:1px;height:18px;background:#b4c8dc"></div>
<div style="left:809px;top:696px;width:1px;height:18px;background:#000000"></div>
<div style="left:810px;top:696px;width:1px;height:18px;background:#ffffff"></div>
<div style="left:809px;top:715px;width:1px;height:18px;background:#b4c8dc"></div>
<div style="left:901px;top:696px;width:1px;height:18px;background:#000000"></div>
<div style="left:902px;top:696px;width:1px;height:18px;background:#ffffff"></div>
<div style="left:901px;top:715px;width:1px;height:18px;background:#b4c8dc"></div>
<div style="left:1146px;top:696px;width:1px;height:18px;background:#000000"></div>
<div style="left:1146px;top:715px;width:1px;height:18px;background:#b4c8dc"></div>
<div style="left:402px;top:696px;width:1px;height:18px;background:#ffffff"></div>
<div class="t" style="left:417.00px;top:699.69px;font-size:11px;color:#000;transform:scaleX(0.9600);transform-origin:0 0;">Empresa</div>
<div class="t" style="left:482.00px;top:699.69px;font-size:11px;color:#000;transform:scaleX(0.9600);transform-origin:0 0;">Descrição</div>
<div class="t" style="left:668.00px;top:699.69px;font-size:11px;color:#000;transform:scaleX(0.9600);transform-origin:0 0;">Coleta</div>
<div class="t" style="left:733.00px;top:699.69px;font-size:11px;color:#000;transform:scaleX(0.9600);transform-origin:0 0;">Emissão</div>
<div class="t" style="left:812.00px;top:699.69px;font-size:11px;color:#000;transform:scaleX(0.9600);transform-origin:0 0;">Requisitante</div>
<div class="t" style="left:904.00px;top:699.69px;font-size:11px;color:#000;transform:scaleX(0.9600);transform-origin:0 0;">Nome</div>
<div style="left:401px;top:766px;width:1140px;height:80px;border:1px solid;border-color:#a0a0a0 #fff #fff #a0a0a0;box-shadow:inset 1px 1px #696969, inset -1px -1px #e3e3e3;background:#ffffe1;overflow:hidden"></div>
<div style="left:402px;top:768px;width:755px;height:18px;background:#f0f0f0"></div>
<div style="left:402px;top:768px;width:755px;height:1px;background:#ffffff"></div>
<div style="left:402px;top:786px;width:756px;height:1px;background:#000000"></div>
<div style="left:415px;top:787px;width:743px;height:18px;background:#0078d7"></div>
<div style="left:402px;top:787px;width:12px;height:18px;background:#f0f0f0"></div>
<div style="left:402px;top:805px;width:13px;height:1px;background:#000000"></div>
<div style="left:402px;top:787px;width:12px;height:1px;background:#ffffff"></div>
<div style="left:402px;top:787px;width:1px;height:18px;background:#ffffff"></div>
<div style="left:406px;top:790px;width:0;height:0;border-top:5px solid transparent;border-bottom:5px solid transparent;border-left:6px solid #000"></div>
<div style="left:414px;top:768px;width:1px;height:18px;background:#000000"></div>
<div style="left:415px;top:768px;width:1px;height:18px;background:#ffffff"></div>
<div style="left:414px;top:787px;width:1px;height:18px;background:#000000"></div>
<div style="left:453px;top:768px;width:1px;height:18px;background:#000000"></div>
<div style="left:454px;top:768px;width:1px;height:18px;background:#ffffff"></div>
<div style="left:453px;top:787px;width:1px;height:18px;background:#b4c8dc"></div>
<div style="left:526px;top:768px;width:1px;height:18px;background:#000000"></div>
<div style="left:527px;top:768px;width:1px;height:18px;background:#ffffff"></div>
<div style="left:526px;top:787px;width:1px;height:18px;background:#b4c8dc"></div>
<div style="left:616px;top:768px;width:1px;height:18px;background:#000000"></div>
<div style="left:617px;top:768px;width:1px;height:18px;background:#ffffff"></div>
<div style="left:616px;top:787px;width:1px;height:18px;background:#b4c8dc"></div>
<div style="left:703px;top:768px;width:1px;height:18px;background:#000000"></div>
<div style="left:704px;top:768px;width:1px;height:18px;background:#ffffff"></div>
<div style="left:703px;top:787px;width:1px;height:18px;background:#b4c8dc"></div>
<div style="left:851px;top:768px;width:1px;height:18px;background:#000000"></div>
<div style="left:852px;top:768px;width:1px;height:18px;background:#ffffff"></div>
<div style="left:851px;top:787px;width:1px;height:18px;background:#b4c8dc"></div>
<div style="left:940px;top:768px;width:1px;height:18px;background:#000000"></div>
<div style="left:941px;top:768px;width:1px;height:18px;background:#ffffff"></div>
<div style="left:940px;top:787px;width:1px;height:18px;background:#b4c8dc"></div>
<div style="left:1022px;top:768px;width:1px;height:18px;background:#000000"></div>
<div style="left:1023px;top:768px;width:1px;height:18px;background:#ffffff"></div>
<div style="left:1022px;top:787px;width:1px;height:18px;background:#b4c8dc"></div>
<div style="left:1092px;top:768px;width:1px;height:18px;background:#000000"></div>
<div style="left:1093px;top:768px;width:1px;height:18px;background:#ffffff"></div>
<div style="left:1092px;top:787px;width:1px;height:18px;background:#b4c8dc"></div>
<div style="left:1157px;top:768px;width:1px;height:18px;background:#000000"></div>
<div style="left:1157px;top:787px;width:1px;height:18px;background:#b4c8dc"></div>
<div style="left:402px;top:768px;width:1px;height:18px;background:#ffffff"></div>
<div style="left:416px;top:768px;width:1px;height:18px;background:#000000"></div>
<div style="left:416px;top:787px;width:1px;height:18px;background:#c8d8e8"></div>
<div class="t" style="left:419.00px;top:771.69px;font-size:11px;color:#000;transform:scaleX(0.9600);transform-origin:0 0;">Série</div>
<div class="t" style="left:456.00px;top:771.69px;font-size:11px;color:#000;transform:scaleX(0.9600);transform-origin:0 0;">Nº Nota Fiscal</div>
<div class="t" style="left:552.25px;top:771.69px;font-size:11px;color:#000;transform:scaleX(0.9600);transform-origin:0 0;">Emissão</div>
<div class="t" style="left:639.87px;top:771.69px;font-size:11px;color:#000;transform:scaleX(0.9600);transform-origin:0 0;">Inscrição</div>
<div class="t" style="left:706.00px;top:771.69px;font-size:11px;color:#000;transform:scaleX(0.9600);transform-origin:0 0;">Nome</div>
<div class="t" style="left:854.00px;top:771.69px;font-size:11px;color:#000;transform:scaleX(0.9600);transform-origin:0 0;">Valor Mercadoria</div>
<div class="t" style="left:970.47px;top:771.69px;font-size:11px;color:#000;transform:scaleX(0.9600);transform-origin:0 0;">Peso</div>
<div class="t" style="left:1025.00px;top:771.69px;font-size:11px;color:#000;transform:scaleX(0.9600);transform-origin:0 0;">Volume</div>
<div class="t" style="left:1095.00px;top:771.69px;font-size:11px;color:#000;transform:scaleX(0.9600);transform-origin:0 0;">Qt. Pares</div>
<div class="t" style="left:420.00px;top:790.69px;font-size:11px;color:#fff;transform:scaleX(0.9600);transform-origin:0 0;">1</div>
<div class="t" style="left:487.77px;top:790.69px;font-size:11px;color:#fff;transform:scaleX(0.9600);transform-origin:0 0;">145289</div>
<div class="t" style="left:530.00px;top:790.69px;font-size:11px;color:#fff;transform:scaleX(0.9600);transform-origin:0 0;">09/06/2019</div>
<div class="t" style="left:620.00px;top:790.69px;font-size:11px;color:#fff;transform:scaleX(0.9600);transform-origin:0 0;">09664934000100</div>
<div class="t" style="left:707.00px;top:790.69px;font-size:11px;color:#fff;transform:scaleX(0.9600);transform-origin:0 0;">BEST BOX EMB LTDA</div>
<div class="t" style="left:895.90px;top:790.69px;font-size:11px;color:#fff;transform:scaleX(0.9600);transform-origin:0 0;">1.000,00</div>
<div class="t" style="left:986.70px;top:790.69px;font-size:11px;color:#fff;transform:scaleX(0.9600);transform-origin:0 0;">10,000</div>
<div class="t" style="left:1083.13px;top:790.69px;font-size:11px;color:#fff;transform:scaleX(0.9600);transform-origin:0 0;">1</div>
<div style="left:392px;top:745px;width:782px;height:73px;border:3px solid #003d00;border-radius:1px"></div>
</body></html>
